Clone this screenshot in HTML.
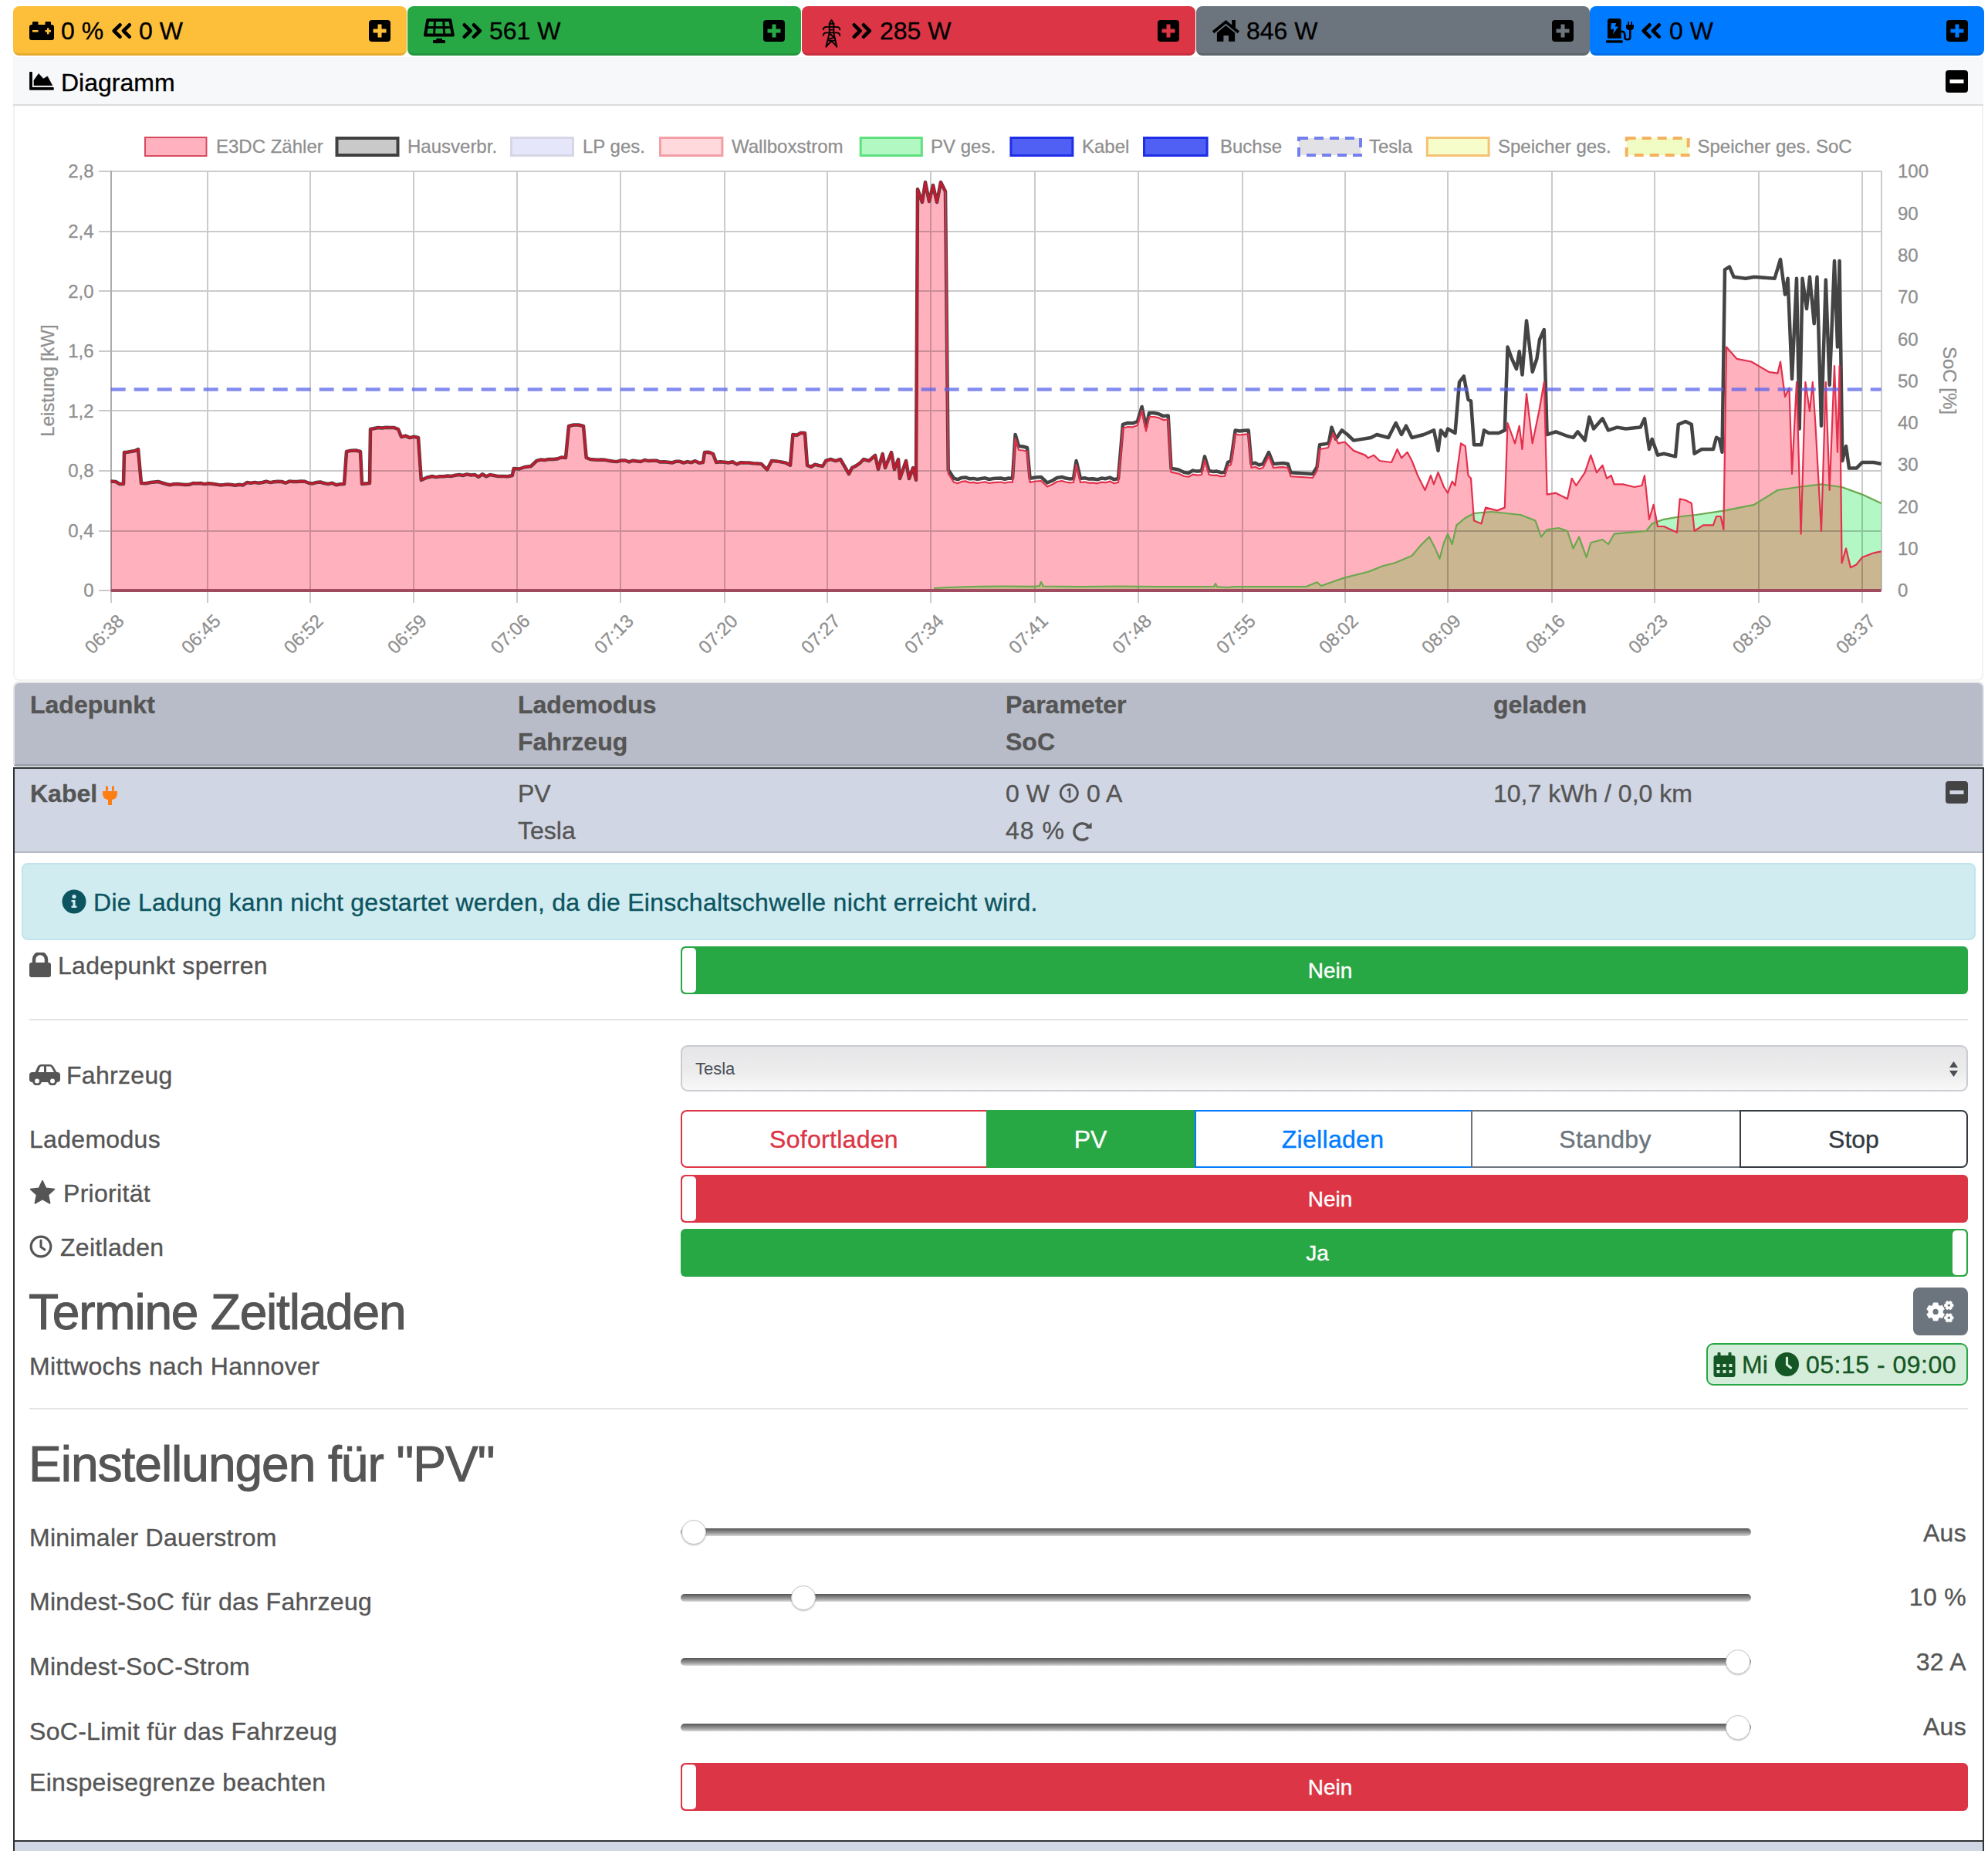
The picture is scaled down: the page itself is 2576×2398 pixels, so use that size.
<!DOCTYPE html>
<html><head><meta charset="utf-8"><style>
html,body{margin:0;padding:0;background:#fff;}
body{width:2576px;height:2398px;position:relative;overflow:hidden;font-family:"Liberation Sans", sans-serif;color:#555;}
.a{position:absolute;white-space:nowrap;}
.tb{position:absolute;top:8px;height:61px;border-radius:8px;border-bottom:3px solid rgba(0,0,0,0.12);}
.t32{font-size:32px;line-height:32px;-webkit-text-stroke:0.35px;}
.sw{position:absolute;left:882px;width:1668px;height:62px;border-radius:6px;}
.sw .h{position:absolute;top:2px;width:18px;height:58px;background:#fff;border-radius:5px;}
.sw .l{position:absolute;top:1px;left:0;right:0;line-height:62px;text-align:center;color:#fff;font-size:28px;-webkit-text-stroke:0.4px #fff;}
.trk{position:absolute;left:882px;width:1387px;height:10px;border-radius:5px;background:linear-gradient(#555,#9a9a9a 60%,#d8d8d8);}
.thumb{position:absolute;width:32px;height:32px;border-radius:50%;background:#fff;border:1px solid #c8c8c8;box-sizing:border-box;box-shadow:0 1px 2px rgba(0,0,0,0.25);}
.hr{position:absolute;left:38px;width:2512px;height:2px;background:#e5e5e5;}
</style></head><body>

<div class="tb" style="left:17px;width:510px;background:#fdbf3a;border-bottom-color:#e6aa2e"></div>
<div class="tb" style="left:528px;width:510px;background:#28a745;border-bottom-color:#23963d"></div>
<div class="tb" style="left:1039px;width:510px;background:#dc3545;border-bottom-color:#c82e3d"></div>
<div class="tb" style="left:1550px;width:510px;background:#6c757d;border-bottom-color:#5f676e"></div>
<div class="tb" style="left:2060px;width:511px;background:#007bff;border-bottom-color:#006fe6"></div>
<svg style="position:absolute;left:478px;top:26px" width="28" height="28" viewBox="0 0 28 28"><rect x="0" y="0" width="28" height="28" rx="4" fill="#000"/><rect x="11.5" y="5.5" width="5" height="17" fill="#fdbf3a"/><rect x="5.5" y="11.5" width="17" height="5" fill="#fdbf3a"/></svg>
<svg style="position:absolute;left:989px;top:26px" width="28" height="28" viewBox="0 0 28 28"><rect x="0" y="0" width="28" height="28" rx="4" fill="#000"/><rect x="11.5" y="5.5" width="5" height="17" fill="#28a745"/><rect x="5.5" y="11.5" width="17" height="5" fill="#28a745"/></svg>
<svg style="position:absolute;left:1500px;top:26px" width="28" height="28" viewBox="0 0 28 28"><rect x="0" y="0" width="28" height="28" rx="4" fill="#000"/><rect x="11.5" y="5.5" width="5" height="17" fill="#dc3545"/><rect x="5.5" y="11.5" width="17" height="5" fill="#dc3545"/></svg>
<svg style="position:absolute;left:2011px;top:26px" width="28" height="28" viewBox="0 0 28 28"><rect x="0" y="0" width="28" height="28" rx="4" fill="#000"/><rect x="11.5" y="5.5" width="5" height="17" fill="#6c757d"/><rect x="5.5" y="11.5" width="17" height="5" fill="#6c757d"/></svg>
<svg style="position:absolute;left:2522px;top:26px" width="28" height="28" viewBox="0 0 28 28"><rect x="0" y="0" width="28" height="28" rx="4" fill="#000"/><rect x="11.5" y="5.5" width="5" height="17" fill="#007bff"/><rect x="5.5" y="11.5" width="17" height="5" fill="#007bff"/></svg>
<svg class="a" style="left:38px;top:28px" width="32" height="24" viewBox="0 0 32 24"><rect x="4" y="0" width="7.5" height="5" rx="1" fill="#000"/><rect x="20.5" y="0" width="7.5" height="5" rx="1" fill="#000"/><rect x="0" y="4" width="32" height="20" rx="3" fill="#000"/><rect x="4" y="11" width="7.5" height="2.5" fill="#fdbf3a"/><rect x="20.5" y="11" width="7.5" height="2.5" fill="#fdbf3a"/><rect x="23" y="8.3" width="2.5" height="8" fill="#fdbf3a"/></svg>
<svg class="a" style="left:144.5px;top:29px" width="28" height="24" viewBox="0 0 28 24"><path d="M10.5 3.3 L2.8 11.0 L10.5 18.7 M22.7 3.3 L15.0 11.0 L22.7 18.7" fill="none" stroke="#000" stroke-width="4.6" stroke-linecap="round" stroke-linejoin="round"/></svg>
<div class="a t32" style="left:79px;top:24px;color:#000">0 %</div>
<div class="a t32" style="left:180px;top:24px;color:#000">0 W</div>
<svg class="a" style="left:540px;top:20px" width="50" height="40" viewBox="0 0 50 40"><path d="M14.2 6.1 H43.3 L46.9 25.6 H11 Z" fill="none" stroke="#000" stroke-width="4" stroke-linejoin="round"/><path d="M12.5 15.6 H45 M23.6 6 L22.5 25.6 M34.7 6 L35.7 25.6" stroke="#000" stroke-width="3"/><rect x="25.3" y="29.8" width="7.7" height="3" fill="#000"/><rect x="21" y="32.1" width="15.9" height="3.9" rx="1" fill="#000"/></svg>
<svg class="a" style="left:598.5px;top:29px" width="28" height="24" viewBox="0 0 28 24"><path d="M2.8 3.3 L10.5 11.0 L2.8 18.7 M15.0 3.3 L22.7 11.0 L15.0 18.7" fill="none" stroke="#000" stroke-width="4.6" stroke-linecap="round" stroke-linejoin="round"/></svg>
<div class="a t32" style="left:634px;top:24px;color:#000">561 W</div>
<svg class="a" style="left:1060px;top:20px" width="40" height="46" viewBox="0 0 40 46"><g stroke="#000" stroke-width="1.9" fill="none" stroke-linejoin="round" stroke-linecap="round"><path d="M17.4 6 L14.7 10.7 H20.4 Z"/><path d="M14.7 10.7 V23.1 M20.4 10.7 V23.1 M14.7 14.6 H20.4 M14.7 18.6 H20.4"/><path d="M6.8 18.3 Q7 15 10.5 14.9 H24.5 Q28 15 28.3 18.3"/><path d="M6.8 25.8 Q7 22.6 10.5 22.4 H24.5 Q28 22.6 28.3 25.8"/><path d="M14.7 23.1 L10.4 40.7 M20.4 23.1 L24.3 40.7"/><path d="M14.8 23.2 L20.8 28.5 L14.5 30.6 M12.8 32.6 H22.4 M10.8 39.8 L17.5 33.2 L23.8 39.5"/></g></svg>
<svg class="a" style="left:1104.0px;top:29px" width="28" height="24" viewBox="0 0 28 24"><path d="M2.8 3.3 L10.5 11.0 L2.8 18.7 M15.0 3.3 L22.7 11.0 L15.0 18.7" fill="none" stroke="#000" stroke-width="4.6" stroke-linecap="round" stroke-linejoin="round"/></svg>
<div class="a t32" style="left:1140px;top:24px;color:#000">285 W</div>
<svg class="a" style="left:1560px;top:20px" width="60" height="40" viewBox="0 0 60 40"><rect x="36.2" y="6" width="4.7" height="10" fill="#000"/><path d="M12 21.8 L28.4 8.4 L44.8 21.8" fill="none" stroke="#000" stroke-width="3.7" stroke-linejoin="miter"/><path d="M16.9 22.4 L28.4 13.1 L40.1 22.4 V33.8 H32 V26 H25.4 V33.8 H16.9 Z" fill="#000"/></svg>
<div class="a t32" style="left:1615px;top:24px;color:#000">846 W</div>
<svg class="a" style="left:2076px;top:20px" width="44" height="38" viewBox="0 0 44 38"><path d="M7 29.8 V7.2 Q7 4 10.2 4 H21.5 Q24.7 4 24.7 7.2 V29.8 Z" fill="#000"/><rect x="5" y="32.2" width="21.8" height="3.4" rx="1" fill="#000"/><path d="M12 10 H18.2 L16.6 14.4 H21 L14 24.2 L15.3 17.8 H11 Z" fill="#007bff"/><path d="M24 20.8 Q29.3 20.3 29.3 25 V28 Q29.3 31.2 32.9 31.2 Q36.3 31.2 36.3 28 V18" fill="none" stroke="#000" stroke-width="2.6"/><path d="M31 12 H41 V14.8 Q41 18.7 37.3 18.9 H34.7 Q31 18.7 31 14.8 Z" fill="#000"/><rect x="33.3" y="8" width="1.7" height="5" fill="#000"/><rect x="37.3" y="8" width="1.7" height="5" fill="#000"/></svg>
<svg class="a" style="left:2126.5px;top:29px" width="28" height="24" viewBox="0 0 28 24"><path d="M10.5 3.3 L2.8 11.0 L10.5 18.7 M22.7 3.3 L15.0 11.0 L22.7 18.7" fill="none" stroke="#000" stroke-width="4.6" stroke-linecap="round" stroke-linejoin="round"/></svg>
<div class="a t32" style="left:2163px;top:24px;color:#000">0 W</div>
<div class="a" style="left:17px;top:72px;width:2553px;height:810px;border:2px solid #f2f2f2;border-top:none;border-radius:0 0 8px 8px;box-sizing:border-box"></div>
<div class="a" style="left:17px;top:74px;width:2553px;height:61px;background:#f7f8fa;border-bottom:2px solid #dcdcdc"></div>
<svg class="a" style="left:38px;top:93px" width="33" height="25" viewBox="0 0 33 25"><path d="M1.1 0 H2.9 Q3.9 0 3.9 1 V20 H30.8 Q31.8 20 31.8 21 V22.7 Q31.8 23.7 30.8 23.7 H1.1 Q0.1 23.7 0.1 22.7 V1 Q0.1 0 1.1 0 Z" fill="#000"/><path d="M6 11 L12.1 2.4 L18.2 9.1 L23.5 5.9 L29.8 17.8 H6 Z" fill="#000" stroke="#000" stroke-width="0.6" stroke-linejoin="round"/></svg>
<div class="a t32" style="left:79px;top:91px;color:#000">Diagramm</div>
<svg style="position:absolute;left:2521px;top:91px" width="29" height="29" viewBox="0 0 29 29"><rect x="0" y="0" width="29" height="29" rx="4" fill="#000"/><rect x="5.5" y="12" width="18" height="5" fill="#fff"/></svg>
<svg width="2576" height="760" viewBox="0 136 2576 760" style="position:absolute;left:0;top:136px;font-family:'Liberation Sans',sans-serif"><style>text{stroke:#8f8f8f;stroke-width:0.3px}</style>
<rect x="188.0" y="178.0" width="79.5" height="24.0" fill="#ffb1bf" stroke="#d94a5e" stroke-width="2"/>
<text x="280" y="198" font-size="24" fill="#8f8f8f">E3DC Zähler</text>
<rect x="436.5" y="179.0" width="79.0" height="22.0" fill="#c9c9c9" stroke="#404040" stroke-width="4"/>
<text x="528" y="198" font-size="24" fill="#8f8f8f">Hausverbr.</text>
<rect x="662.5" y="178.5" width="80.0" height="23.0" fill="#e6e6fa" stroke="#d6d6e6" stroke-width="3"/>
<text x="755" y="198" font-size="24" fill="#8f8f8f">LP ges.</text>
<rect x="855.5" y="178.5" width="80.4" height="23.0" fill="#ffd9dc" stroke="#f49ea6" stroke-width="3"/>
<text x="948" y="198" font-size="24" fill="#8f8f8f">Wallboxstrom</text>
<rect x="1115.2" y="178.5" width="79.1" height="23.0" fill="#b2f8c2" stroke="#5ee07e" stroke-width="3"/>
<text x="1206" y="198" font-size="24" fill="#8f8f8f">PV ges.</text>
<rect x="1309.9" y="178.5" width="80.0" height="23.0" fill="#5060f4" stroke="#1e2ee6" stroke-width="3"/>
<text x="1402" y="198" font-size="24" fill="#8f8f8f">Kabel</text>
<rect x="1482.5" y="178.5" width="81.6" height="23.0" fill="#5060f4" stroke="#1e2ee6" stroke-width="3"/>
<text x="1581" y="198" font-size="24" fill="#8f8f8f">Buchse</text>
<rect x="1683.0" y="179.0" width="80.0" height="22.0" fill="#e2e2e6" stroke="#7580ef" stroke-width="4" stroke-dasharray="12 8"/>
<text x="1774" y="198" font-size="24" fill="#8f8f8f">Tesla</text>
<rect x="1849.3" y="178.5" width="79.8" height="23.0" fill="#f6fcca" stroke="#f5c274" stroke-width="3"/>
<text x="1941" y="198" font-size="24" fill="#8f8f8f">Speicher ges.</text>
<rect x="2107.7" y="179.0" width="80.0" height="22.0" fill="#f0fcc4" stroke="#f5b25e" stroke-width="4" stroke-dasharray="12 8"/>
<text x="2199.5" y="198" font-size="24" fill="#8f8f8f">Speicher ges. SoC</text>
<polygon points="143.7,764.7 143.7,623.6 150.0,624.0 155.0,627.0 160.0,627.0 161.0,586.0 165.0,585.8 175.0,584.0 179.0,582.0 183.0,626.0 189.0,626.3 195.0,625.0 205.0,624.0 215.0,627.0 220.0,628.2 225.0,627.3 230.0,627.0 240.0,628.0 245.0,627.8 250.0,626.1 255.0,626.2 260.0,626.0 265.0,627.1 270.0,626.3 275.0,626.7 280.0,627.5 285.0,628.4 290.0,628.1 295.0,627.6 300.0,628.0 305.0,628.8 310.0,627.7 315.0,628.4 320.0,625.1 325.0,625.7 330.0,624.9 335.0,625.8 340.0,625.0 345.0,623.7 350.0,625.1 355.0,624.2 360.0,623.7 365.0,624.0 370.0,625.7 375.0,623.6 380.0,624.0 385.0,623.9 390.0,623.5 395.0,623.7 400.0,625.8 405.0,626.4 410.0,625.0 415.0,624.5 420.0,626.0 425.2,627.0 430.4,625.7 435.6,628.3 440.8,627.2 446.0,627.0 449.0,585.0 455.0,583.8 461.0,583.5 467.0,585.0 469.0,627.0 479.0,626.0 480.0,556.0 490.0,554.0 495.2,554.4 500.4,553.8 505.6,554.0 510.8,554.1 516.0,556.0 520.0,566.0 525.5,564.6 531.0,567.1 536.5,565.8 542.0,567.0 545.8,622.0 552.9,618.8 560.0,617.0 565.0,618.1 570.0,617.3 575.0,617.3 580.0,616.5 585.0,616.9 590.0,615.7 595.0,615.0 600.0,616.0 605.0,614.4 610.0,615.5 615.0,614.9 620.0,617.8 625.0,614.3 630.0,617.3 635.0,615.1 640.0,616.0 646.0,617.1 651.9,617.1 657.8,617.3 663.8,616.0 665.7,607.0 672.9,607.5 680.0,605.0 688.0,604.0 695.4,597.0 700.4,595.6 705.5,596.1 710.5,595.0 716.1,594.9 721.8,594.6 727.4,592.5 733.0,593.0 737.0,552.0 743.3,550.5 749.7,550.5 756.0,552.0 759.7,593.0 764.8,595.0 769.8,595.4 774.9,595.8 779.9,595.5 785.0,596.1 790.0,597.0 795.0,597.7 800.1,597.9 805.1,596.5 810.2,596.5 815.2,598.4 820.2,596.7 825.3,597.5 830.3,598.0 835.4,596.0 840.4,597.1 845.5,596.8 850.5,596.7 855.5,598.6 860.6,598.2 865.6,598.7 870.7,599.5 875.7,597.8 880.8,597.8 885.8,599.5 890.8,598.1 895.9,599.2 900.9,597.2 906.0,599.7 911.0,599.0 913.0,586.0 918.5,585.8 924.0,588.0 928.0,599.0 933.3,598.3 938.7,598.7 944.0,599.5 949.3,598.3 954.6,601.4 960.0,599.2 965.3,599.6 970.6,599.5 975.9,600.2 981.3,600.5 986.6,601.0 994.0,608.5 999.8,597.0 1005.8,597.4 1011.9,598.4 1018.0,599.6 1024.0,602.8 1027.4,563.0 1032.6,563.8 1037.8,560.8 1043.0,561.0 1046.0,602.8 1051.0,604.8 1056.0,601.8 1061.0,603.0 1066.0,604.0 1070.0,597.0 1076.3,594.9 1082.7,597.1 1089.0,595.0 1100.0,614.0 1104.0,606.0 1109.0,603.6 1114.0,600.2 1119.0,595.0 1126.0,597.0 1134.0,590.0 1138.0,608.0 1143.6,588.0 1147.0,606.0 1155.0,586.0 1159.0,608.0 1164.0,595.0 1166.0,620.0 1174.0,597.0 1178.0,620.0 1183.0,606.0 1187.0,621.7 1189.0,245.0 1195.0,262.0 1199.0,236.0 1204.0,261.0 1209.0,240.0 1214.0,262.0 1219.0,236.0 1225.0,248.0 1228.7,613.5 1236.0,624.8 1241.1,626.1 1246.1,623.9 1251.2,623.4 1256.3,625.3 1261.3,624.9 1266.4,625.9 1271.5,625.0 1276.5,624.3 1281.6,626.0 1286.7,625.1 1291.7,624.8 1296.8,624.5 1301.9,625.7 1306.9,624.5 1312.0,624.8 1315.6,568.0 1320.0,583.0 1325.5,583.5 1331.0,585.0 1334.6,624.8 1341.8,623.5 1349.0,623.0 1357.0,630.5 1363.3,627.8 1369.7,624.0 1376.0,623.0 1381.0,624.5 1386.0,625.4 1391.0,625.0 1394.6,602.0 1400.0,625.0 1405.4,624.3 1410.9,625.6 1416.3,625.3 1421.8,626.3 1427.2,624.6 1432.7,625.2 1438.1,623.6 1443.6,626.2 1449.0,625.0 1455.0,554.8 1461.3,553.0 1467.7,553.3 1474.0,551.0 1479.6,532.0 1485.0,558.6 1489.0,540.0 1495.2,540.0 1501.3,541.2 1507.5,544.1 1513.7,543.5 1517.5,611.6 1527.0,613.5 1534.5,617.0 1540.1,617.7 1545.8,614.6 1551.4,615.6 1557.0,615.0 1561.0,596.4 1566.6,615.0 1571.7,615.9 1576.8,615.6 1581.9,617.2 1587.0,617.0 1591.0,604.0 1595.0,602.0 1600.7,562.4 1606.4,563.5 1612.0,562.8 1617.7,562.4 1621.5,606.0 1626.5,604.8 1631.6,607.4 1636.6,606.0 1644.0,591.0 1650.0,606.0 1656.3,605.4 1662.5,605.1 1668.8,606.0 1672.5,617.2 1701.0,619.0 1706.6,609.8 1710.0,582.0 1721.0,580.0 1727.5,561.0 1734.0,574.4 1742.5,572.5 1754.0,583.9 1769.0,589.6 1772.8,593.4 1780.0,589.6 1787.8,597.0 1803.0,599.0 1810.6,582.0 1816.0,593.4 1823.6,585.8 1829.5,597.0 1837.0,616.0 1846.5,635.0 1854.0,616.0 1857.9,627.4 1863.5,612.0 1871.0,631.0 1876.0,638.7 1881.7,623.6 1885.5,629.0 1893.0,574.4 1898.7,578.0 1902.5,616.0 1906.0,619.8 1910.0,674.6 1919.5,678.4 1925.0,657.6 1940.0,661.4 1949.8,657.6 1953.5,548.0 1963.0,574.4 1968.7,551.7 1972.5,582.0 1978.0,510.0 1985.7,574.4 1995.0,529.0 2000.8,495.0 2004.6,640.6 2016.0,638.7 2031.0,646.3 2036.7,619.8 2042.4,629.0 2053.7,612.2 2061.3,589.6 2068.9,612.2 2076.5,602.8 2082.0,619.8 2087.8,616.0 2091.6,627.4 2103.0,627.4 2118.0,631.0 2127.5,629.0 2131.0,616.0 2137.0,672.8 2142.6,653.8 2148.0,682.0 2156.0,682.0 2173.0,689.8 2176.7,646.3 2184.0,648.0 2191.8,652.0 2195.6,688.0 2207.0,680.3 2220.0,680.3 2224.0,669.0 2229.6,669.0 2233.4,686.0 2237.0,449.6 2250.4,464.8 2269.3,468.5 2292.0,481.8 2303.4,483.7 2307.0,468.5 2313.0,514.0 2318.5,502.6 2322.0,614.0 2328.0,495.0 2333.6,691.7 2339.4,495.0 2345.0,532.8 2348.8,495.0 2352.5,551.7 2360.0,688.0 2365.8,495.0 2370.7,635.0 2377.0,474.0 2381.0,585.8 2383.6,474.0 2386.6,729.5 2392.0,710.6 2397.9,735.2 2405.5,731.4 2413.0,722.0 2428.0,716.3 2437.6,714.4 2437.6,764.7" fill="#ffb1be"/>
<polygon points="1210.0,764.7 1210.0,762.0 1230.0,761.0 1260.0,760.0 1300.0,759.5 1340.0,759.8 1347.0,759.0 1349.0,754.0 1352.0,759.5 1400.0,760.0 1450.0,759.5 1500.0,760.0 1573.0,760.0 1575.0,756.0 1577.0,760.0 1590.0,761.0 1600.0,760.0 1650.0,760.0 1693.0,759.8 1706.6,754.2 1712.0,759.0 1731.0,752.3 1742.5,748.4 1772.8,740.8 1791.7,733.3 1806.8,729.5 1829.5,720.0 1840.8,706.6 1852.0,695.5 1859.8,710.6 1865.4,723.8 1871.0,703.0 1876.0,691.7 1881.7,705.0 1887.3,680.3 1898.7,671.0 1910.0,665.0 1932.7,663.0 1951.6,665.0 1970.5,667.0 1989.5,674.6 1997.0,695.5 2004.6,686.0 2019.7,684.0 2031.0,688.0 2038.6,710.6 2046.0,695.5 2055.7,722.0 2061.3,703.0 2076.5,699.0 2084.0,705.0 2091.6,691.7 2110.5,689.8 2133.0,688.0 2140.7,678.4 2156.0,672.8 2178.6,669.0 2197.5,667.0 2235.3,661.4 2273.0,653.8 2303.4,635.0 2330.0,631.0 2360.0,627.4 2386.6,631.0 2413.0,640.6 2437.6,652.0 2437.6,764.7" fill="#b2f7c4"/>
<polygon points="1210.0,764.7 1210.0,762.0 1211.0,762.0 1212.0,761.9 1213.0,761.9 1214.0,761.8 1215.0,761.8 1216.0,761.7 1217.0,761.6 1218.0,761.6 1219.0,761.5 1220.0,761.5 1221.0,761.5 1222.0,761.4 1223.0,761.4 1224.0,761.3 1225.0,761.2 1226.0,761.2 1227.0,761.1 1228.0,761.1 1228.7,761.1 1229.0,761.0 1230.0,761.0 1231.0,761.0 1232.0,760.9 1233.0,760.9 1234.0,760.9 1235.0,760.8 1236.0,760.8 1237.0,760.8 1238.0,760.7 1239.0,760.7 1240.0,760.7 1241.0,760.6 1241.1,760.6 1242.0,760.6 1243.0,760.6 1244.0,760.5 1245.0,760.5 1246.0,760.5 1246.1,760.5 1247.0,760.4 1248.0,760.4 1249.0,760.4 1250.0,760.3 1251.0,760.3 1251.2,760.3 1252.0,760.3 1253.0,760.2 1254.0,760.2 1255.0,760.2 1256.0,760.1 1256.3,760.1 1257.0,760.1 1258.0,760.1 1259.0,760.0 1260.0,760.0 1261.0,760.0 1261.3,760.0 1262.0,760.0 1263.0,760.0 1264.0,760.0 1265.0,759.9 1266.0,759.9 1266.4,759.9 1267.0,759.9 1268.0,759.9 1269.0,759.9 1270.0,759.9 1271.0,759.9 1271.5,759.9 1272.0,759.9 1273.0,759.8 1274.0,759.8 1275.0,759.8 1276.0,759.8 1276.5,759.8 1277.0,759.8 1278.0,759.8 1279.0,759.8 1280.0,759.8 1281.0,759.7 1281.6,759.7 1282.0,759.7 1283.0,759.7 1284.0,759.7 1285.0,759.7 1286.0,759.7 1286.7,759.7 1287.0,759.7 1288.0,759.6 1289.0,759.6 1290.0,759.6 1291.0,759.6 1291.7,759.6 1292.0,759.6 1293.0,759.6 1294.0,759.6 1295.0,759.6 1296.0,759.5 1296.8,759.5 1297.0,759.5 1298.0,759.5 1299.0,759.5 1300.0,759.5 1301.0,759.5 1301.9,759.5 1302.0,759.5 1303.0,759.5 1304.0,759.5 1305.0,759.5 1306.0,759.5 1306.9,759.6 1307.0,759.6 1308.0,759.6 1309.0,759.6 1310.0,759.6 1311.0,759.6 1312.0,759.6 1313.0,759.6 1314.0,759.6 1315.0,759.6 1315.6,759.6 1316.0,759.6 1317.0,759.6 1318.0,759.6 1319.0,759.6 1320.0,759.6 1321.0,759.7 1322.0,759.7 1323.0,759.7 1324.0,759.7 1325.0,759.7 1325.5,759.7 1326.0,759.7 1327.0,759.7 1328.0,759.7 1329.0,759.7 1330.0,759.7 1331.0,759.7 1332.0,759.7 1333.0,759.7 1334.0,759.8 1334.6,759.8 1335.0,759.8 1336.0,759.8 1337.0,759.8 1338.0,759.8 1339.0,759.8 1340.0,759.8 1341.0,759.7 1341.8,759.6 1342.0,759.6 1343.0,759.5 1344.0,759.3 1345.0,759.2 1346.0,759.1 1347.0,759.0 1348.0,756.5 1349.0,754.0 1350.0,755.8 1351.0,757.7 1352.0,759.5 1353.0,759.5 1354.0,759.5 1355.0,759.5 1356.0,759.5 1357.0,759.6 1358.0,759.6 1359.0,759.6 1360.0,759.6 1361.0,759.6 1362.0,759.6 1363.0,759.6 1363.3,759.6 1364.0,759.6 1365.0,759.6 1366.0,759.6 1367.0,759.7 1368.0,759.7 1369.0,759.7 1369.7,759.7 1370.0,759.7 1371.0,759.7 1372.0,759.7 1373.0,759.7 1374.0,759.7 1375.0,759.7 1376.0,759.8 1377.0,759.8 1378.0,759.8 1379.0,759.8 1380.0,759.8 1381.0,759.8 1382.0,759.8 1383.0,759.8 1384.0,759.8 1385.0,759.8 1386.0,759.9 1387.0,759.9 1388.0,759.9 1389.0,759.9 1390.0,759.9 1391.0,759.9 1392.0,759.9 1393.0,759.9 1394.0,759.9 1394.6,759.9 1395.0,759.9 1396.0,760.0 1397.0,760.0 1398.0,760.0 1399.0,760.0 1400.0,760.0 1401.0,760.0 1402.0,760.0 1403.0,760.0 1404.0,760.0 1405.0,760.0 1405.4,759.9 1406.0,759.9 1407.0,759.9 1408.0,759.9 1409.0,759.9 1410.0,759.9 1410.9,759.9 1411.0,759.9 1412.0,759.9 1413.0,759.9 1414.0,759.9 1415.0,759.9 1416.0,759.8 1416.3,759.8 1417.0,759.8 1418.0,759.8 1419.0,759.8 1420.0,759.8 1421.0,759.8 1421.8,759.8 1422.0,759.8 1423.0,759.8 1424.0,759.8 1425.0,759.8 1426.0,759.7 1427.0,759.7 1427.2,759.7 1428.0,759.7 1429.0,759.7 1430.0,759.7 1431.0,759.7 1432.0,759.7 1432.7,759.7 1433.0,759.7 1434.0,759.7 1435.0,759.6 1436.0,759.6 1437.0,759.6 1438.0,759.6 1438.1,759.6 1439.0,759.6 1440.0,759.6 1441.0,759.6 1442.0,759.6 1443.0,759.6 1443.6,759.6 1444.0,759.6 1445.0,759.5 1446.0,759.5 1447.0,759.5 1448.0,759.5 1449.0,759.5 1450.0,759.5 1451.0,759.5 1452.0,759.5 1453.0,759.5 1454.0,759.5 1455.0,759.5 1456.0,759.6 1457.0,759.6 1458.0,759.6 1459.0,759.6 1460.0,759.6 1461.0,759.6 1461.3,759.6 1462.0,759.6 1463.0,759.6 1464.0,759.6 1465.0,759.6 1466.0,759.7 1467.0,759.7 1467.7,759.7 1468.0,759.7 1469.0,759.7 1470.0,759.7 1471.0,759.7 1472.0,759.7 1473.0,759.7 1474.0,759.7 1475.0,759.8 1476.0,759.8 1477.0,759.8 1478.0,759.8 1479.0,759.8 1479.6,759.8 1480.0,759.8 1481.0,759.8 1482.0,759.8 1483.0,759.8 1484.0,759.8 1485.0,759.9 1486.0,759.9 1487.0,759.9 1488.0,759.9 1489.0,759.9 1490.0,759.9 1491.0,759.9 1492.0,759.9 1493.0,759.9 1494.0,759.9 1495.0,760.0 1495.2,760.0 1496.0,760.0 1497.0,760.0 1498.0,760.0 1499.0,760.0 1500.0,760.0 1501.0,760.0 1501.3,760.0 1502.0,760.0 1503.0,760.0 1504.0,760.0 1505.0,760.0 1506.0,760.0 1507.0,760.0 1507.5,760.0 1508.0,760.0 1509.0,760.0 1510.0,760.0 1511.0,760.0 1512.0,760.0 1513.0,760.0 1513.7,760.0 1514.0,760.0 1515.0,760.0 1516.0,760.0 1517.0,760.0 1517.5,760.0 1518.0,760.0 1519.0,760.0 1520.0,760.0 1521.0,760.0 1522.0,760.0 1523.0,760.0 1524.0,760.0 1525.0,760.0 1526.0,760.0 1527.0,760.0 1528.0,760.0 1529.0,760.0 1530.0,760.0 1531.0,760.0 1532.0,760.0 1533.0,760.0 1534.0,760.0 1534.5,760.0 1535.0,760.0 1536.0,760.0 1537.0,760.0 1538.0,760.0 1539.0,760.0 1540.0,760.0 1540.1,760.0 1541.0,760.0 1542.0,760.0 1543.0,760.0 1544.0,760.0 1545.0,760.0 1545.8,760.0 1546.0,760.0 1547.0,760.0 1548.0,760.0 1549.0,760.0 1550.0,760.0 1551.0,760.0 1551.4,760.0 1552.0,760.0 1553.0,760.0 1554.0,760.0 1555.0,760.0 1556.0,760.0 1557.0,760.0 1558.0,760.0 1559.0,760.0 1560.0,760.0 1561.0,760.0 1562.0,760.0 1563.0,760.0 1564.0,760.0 1565.0,760.0 1566.0,760.0 1566.6,760.0 1567.0,760.0 1568.0,760.0 1569.0,760.0 1570.0,760.0 1571.0,760.0 1571.7,760.0 1572.0,760.0 1573.0,760.0 1574.0,758.0 1575.0,756.0 1576.0,758.0 1576.8,759.6 1577.0,760.0 1578.0,760.1 1579.0,760.2 1580.0,760.2 1581.0,760.3 1581.9,760.4 1582.0,760.4 1583.0,760.5 1584.0,760.5 1585.0,760.6 1586.0,760.7 1587.0,760.8 1588.0,760.8 1589.0,760.9 1590.0,761.0 1591.0,760.9 1592.0,760.8 1593.0,760.7 1594.0,760.6 1595.0,760.5 1596.0,760.4 1597.0,760.3 1598.0,760.2 1599.0,760.1 1600.0,760.0 1600.7,760.0 1601.0,760.0 1602.0,760.0 1603.0,760.0 1604.0,760.0 1605.0,760.0 1606.0,760.0 1606.4,760.0 1607.0,760.0 1608.0,760.0 1609.0,760.0 1610.0,760.0 1611.0,760.0 1612.0,760.0 1612.0,760.0 1613.0,760.0 1614.0,760.0 1615.0,760.0 1616.0,760.0 1617.0,760.0 1617.7,760.0 1618.0,760.0 1619.0,760.0 1620.0,760.0 1621.0,760.0 1621.5,760.0 1622.0,760.0 1623.0,760.0 1624.0,760.0 1625.0,760.0 1626.0,760.0 1626.5,760.0 1627.0,760.0 1628.0,760.0 1629.0,760.0 1630.0,760.0 1631.0,760.0 1631.6,760.0 1632.0,760.0 1633.0,760.0 1634.0,760.0 1635.0,760.0 1636.0,760.0 1636.6,760.0 1637.0,760.0 1638.0,760.0 1639.0,760.0 1640.0,760.0 1641.0,760.0 1642.0,760.0 1643.0,760.0 1644.0,760.0 1645.0,760.0 1646.0,760.0 1647.0,760.0 1648.0,760.0 1649.0,760.0 1650.0,760.0 1651.0,760.0 1652.0,760.0 1653.0,760.0 1654.0,760.0 1655.0,760.0 1656.0,760.0 1656.3,760.0 1657.0,760.0 1658.0,760.0 1659.0,760.0 1660.0,760.0 1661.0,759.9 1662.0,759.9 1662.5,759.9 1663.0,759.9 1664.0,759.9 1665.0,759.9 1666.0,759.9 1667.0,759.9 1668.0,759.9 1668.8,759.9 1669.0,759.9 1670.0,759.9 1671.0,759.9 1672.0,759.9 1672.5,759.9 1673.0,759.9 1674.0,759.9 1675.0,759.9 1676.0,759.9 1677.0,759.9 1678.0,759.9 1679.0,759.9 1680.0,759.9 1681.0,759.9 1682.0,759.9 1683.0,759.8 1684.0,759.8 1685.0,759.8 1686.0,759.8 1687.0,759.8 1688.0,759.8 1689.0,759.8 1690.0,759.8 1691.0,759.8 1692.0,759.8 1693.0,759.8 1694.0,759.4 1695.0,759.0 1696.0,758.6 1697.0,758.2 1698.0,757.7 1699.0,757.3 1700.0,756.9 1701.0,756.5 1702.0,756.1 1703.0,755.7 1704.0,755.3 1705.0,754.9 1706.0,754.4 1706.6,754.2 1707.0,754.6 1708.0,755.4 1709.0,756.3 1710.0,757.2 1711.0,758.1 1712.0,759.0 1713.0,758.6 1714.0,758.3 1715.0,757.9 1716.0,757.6 1717.0,757.2 1718.0,756.9 1719.0,756.5 1720.0,756.2 1721.0,755.8 1722.0,755.5 1723.0,755.1 1724.0,754.8 1725.0,754.4 1726.0,754.1 1727.0,753.7 1727.5,753.5 1728.0,753.4 1729.0,753.0 1730.0,752.7 1731.0,752.3 1732.0,752.0 1733.0,751.6 1734.0,751.3 1735.0,750.9 1736.0,750.6 1737.0,750.3 1738.0,749.9 1739.0,749.6 1740.0,749.2 1741.0,748.9 1742.0,748.6 1742.5,748.4 1743.0,748.3 1744.0,748.0 1745.0,747.8 1746.0,747.5 1747.0,747.3 1748.0,747.0 1749.0,746.8 1750.0,746.5 1751.0,746.3 1752.0,746.0 1753.0,745.8 1754.0,745.5 1755.0,745.3 1756.0,745.0 1757.0,744.8 1758.0,744.5 1759.0,744.3 1760.0,744.0 1761.0,743.8 1762.0,743.5 1763.0,743.3 1764.0,743.0 1765.0,742.8 1766.0,742.5 1767.0,742.3 1768.0,742.0 1769.0,741.8 1770.0,741.5 1771.0,741.3 1772.0,741.0 1772.8,740.8 1773.0,740.7 1774.0,740.3 1775.0,739.9 1776.0,739.5 1777.0,739.1 1778.0,738.7 1779.0,738.3 1780.0,737.9 1781.0,737.5 1782.0,737.1 1783.0,736.8 1784.0,736.4 1785.0,736.0 1786.0,735.6 1787.0,735.2 1787.8,734.8 1788.0,734.8 1789.0,734.4 1790.0,734.0 1791.0,733.6 1791.7,733.3 1792.0,733.2 1793.0,733.0 1794.0,732.7 1795.0,732.5 1796.0,732.2 1797.0,732.0 1798.0,731.7 1799.0,731.5 1800.0,731.2 1801.0,731.0 1802.0,730.7 1803.0,730.5 1804.0,730.2 1805.0,730.0 1806.0,729.7 1806.8,729.5 1807.0,729.4 1808.0,729.0 1809.0,728.6 1810.0,728.2 1810.6,727.9 1811.0,727.7 1812.0,727.3 1813.0,726.9 1814.0,726.5 1815.0,726.1 1816.0,725.6 1817.0,725.2 1818.0,724.8 1819.0,724.4 1820.0,724.0 1821.0,723.6 1822.0,723.1 1823.0,722.7 1823.6,722.5 1824.0,722.3 1825.0,721.9 1826.0,721.5 1827.0,721.0 1828.0,720.6 1829.0,720.2 1829.5,720.0 1830.0,719.4 1831.0,718.2 1832.0,717.0 1833.0,715.8 1834.0,714.7 1835.0,713.5 1836.0,712.3 1837.0,711.1 1838.0,709.9 1839.0,708.7 1840.0,707.5 1840.8,706.6 1841.0,706.4 1842.0,705.4 1843.0,704.4 1844.0,703.4 1845.0,702.4 1846.0,701.4 1846.5,701.0 1847.0,700.5 1848.0,699.5 1849.0,698.5 1850.0,697.5 1851.0,696.5 1852.0,695.5 1853.0,697.4 1854.0,699.4 1855.0,701.3 1856.0,703.2 1857.0,705.2 1857.9,706.9 1858.0,707.1 1859.0,709.1 1859.8,710.6 1860.0,711.1 1861.0,713.4 1862.0,715.8 1863.0,718.1 1863.5,719.3 1864.0,720.5 1865.0,722.9 1865.4,723.8 1866.0,721.6 1867.0,717.9 1868.0,714.1 1869.0,710.4 1870.0,706.7 1871.0,703.0 1872.0,700.7 1873.0,698.5 1874.0,696.2 1875.0,694.0 1876.0,691.7 1877.0,694.0 1878.0,696.4 1879.0,698.7 1880.0,701.0 1881.0,703.4 1881.7,705.0 1882.0,703.7 1883.0,699.3 1884.0,694.9 1885.0,690.4 1885.5,688.2 1886.0,686.0 1887.0,681.6 1887.3,680.3 1888.0,679.7 1889.0,678.9 1890.0,678.1 1891.0,677.3 1892.0,676.5 1893.0,675.6 1894.0,674.8 1895.0,674.0 1896.0,673.2 1897.0,672.4 1898.0,671.6 1898.7,671.0 1899.0,670.8 1900.0,670.3 1901.0,669.8 1902.0,669.2 1902.5,669.0 1903.0,668.7 1904.0,668.2 1905.0,667.7 1906.0,667.1 1907.0,666.6 1908.0,666.1 1909.0,665.5 1910.0,674.6 1911.0,675.0 1912.0,675.4 1913.0,675.8 1914.0,676.2 1915.0,676.6 1916.0,677.0 1917.0,677.4 1918.0,677.8 1919.0,678.2 1919.5,678.4 1920.0,676.5 1921.0,672.7 1922.0,668.9 1923.0,665.2 1924.0,663.8 1925.0,663.7 1926.0,663.6 1927.0,663.5 1928.0,663.4 1929.0,663.3 1930.0,663.2 1931.0,663.1 1932.0,663.1 1932.7,663.0 1933.0,663.0 1934.0,663.1 1935.0,663.2 1936.0,663.3 1937.0,663.5 1938.0,663.6 1939.0,663.7 1940.0,663.8 1941.0,663.9 1942.0,664.0 1943.0,664.1 1944.0,664.2 1945.0,664.3 1946.0,664.4 1947.0,664.5 1948.0,664.6 1949.0,664.7 1949.8,664.8 1950.0,664.8 1951.0,664.9 1951.6,665.0 1952.0,665.0 1953.0,665.1 1953.5,665.2 1954.0,665.3 1955.0,665.4 1956.0,665.5 1957.0,665.6 1958.0,665.7 1959.0,665.8 1960.0,665.9 1961.0,666.0 1962.0,666.1 1963.0,666.2 1964.0,666.3 1965.0,666.4 1966.0,666.5 1967.0,666.6 1968.0,666.7 1968.7,666.8 1969.0,666.8 1970.0,666.9 1970.5,667.0 1971.0,667.2 1972.0,667.6 1972.5,667.8 1973.0,668.0 1974.0,668.4 1975.0,668.8 1976.0,669.2 1977.0,669.6 1978.0,670.0 1979.0,670.4 1980.0,670.8 1981.0,671.2 1982.0,671.6 1983.0,672.0 1984.0,672.4 1985.0,672.8 1985.7,673.1 1986.0,673.2 1987.0,673.6 1988.0,674.0 1989.0,674.4 1989.5,674.6 1990.0,676.0 1991.0,678.8 1992.0,681.6 1993.0,684.4 1994.0,687.1 1995.0,689.9 1996.0,692.7 1997.0,695.5 1998.0,694.2 1999.0,693.0 2000.0,691.8 2000.8,690.8 2001.0,690.5 2002.0,689.2 2003.0,688.0 2004.0,686.7 2004.6,686.0 2005.0,685.9 2006.0,685.8 2007.0,685.7 2008.0,685.5 2009.0,685.4 2010.0,685.3 2011.0,685.2 2012.0,685.0 2013.0,684.9 2014.0,684.8 2015.0,684.6 2016.0,684.5 2017.0,684.4 2018.0,684.2 2019.0,684.1 2019.7,684.0 2020.0,684.1 2021.0,684.5 2022.0,684.8 2023.0,685.2 2024.0,685.5 2025.0,685.9 2026.0,686.2 2027.0,686.6 2028.0,686.9 2029.0,687.3 2030.0,687.6 2031.0,688.0 2032.0,691.0 2033.0,693.9 2034.0,696.9 2035.0,699.9 2036.0,702.9 2036.7,705.0 2037.0,705.8 2038.0,708.8 2038.6,710.6 2039.0,709.8 2040.0,707.7 2041.0,705.7 2042.0,703.7 2042.4,702.8 2043.0,701.6 2044.0,699.6 2045.0,697.5 2046.0,695.5 2047.0,698.2 2048.0,701.0 2049.0,703.7 2050.0,706.4 2051.0,709.2 2052.0,711.9 2053.0,714.6 2053.7,716.5 2054.0,717.4 2055.0,720.1 2055.7,722.0 2056.0,721.0 2057.0,717.6 2058.0,714.2 2059.0,710.8 2060.0,707.4 2061.0,704.0 2061.3,703.0 2062.0,702.8 2063.0,702.6 2064.0,702.3 2065.0,702.0 2066.0,701.8 2067.0,701.5 2068.0,701.2 2068.9,701.0 2069.0,701.0 2070.0,700.7 2071.0,700.4 2072.0,700.2 2073.0,699.9 2074.0,699.7 2075.0,699.4 2076.0,699.1 2076.5,699.0 2077.0,699.4 2078.0,700.2 2079.0,701.0 2080.0,701.8 2081.0,702.6 2082.0,703.4 2083.0,704.2 2084.0,705.0 2085.0,703.2 2086.0,701.5 2087.0,699.8 2087.8,698.3 2088.0,698.0 2089.0,696.2 2090.0,694.5 2091.0,692.7 2091.6,691.7 2092.0,691.7 2093.0,691.6 2094.0,691.5 2095.0,691.4 2096.0,691.3 2097.0,691.2 2098.0,691.1 2099.0,691.0 2100.0,690.9 2101.0,690.8 2102.0,690.7 2103.0,690.6 2104.0,690.5 2105.0,690.4 2106.0,690.3 2107.0,690.2 2108.0,690.1 2109.0,690.0 2110.0,689.9 2110.5,689.8 2111.0,689.8 2112.0,689.7 2113.0,689.6 2114.0,689.5 2115.0,689.4 2116.0,689.4 2117.0,689.3 2118.0,689.2 2119.0,689.1 2120.0,689.0 2121.0,689.0 2122.0,688.9 2123.0,688.8 2124.0,688.7 2125.0,688.6 2126.0,688.6 2127.0,688.5 2127.5,688.4 2128.0,688.4 2129.0,688.3 2130.0,688.2 2131.0,688.2 2132.0,688.1 2133.0,688.0 2134.0,686.8 2135.0,685.5 2136.0,684.3 2137.0,683.0 2138.0,681.8 2139.0,680.5 2140.0,679.3 2140.7,678.4 2141.0,678.3 2142.0,677.9 2142.6,677.7 2143.0,677.6 2144.0,677.2 2145.0,676.8 2146.0,676.5 2147.0,676.8 2148.0,682.0 2149.0,682.0 2150.0,682.0 2151.0,682.0 2152.0,682.0 2153.0,682.0 2154.0,682.0 2155.0,682.0 2156.0,682.0 2157.0,682.5 2158.0,682.9 2159.0,683.4 2160.0,683.8 2161.0,684.3 2162.0,684.8 2163.0,685.2 2164.0,685.7 2165.0,686.1 2166.0,686.6 2167.0,687.0 2168.0,687.5 2169.0,688.0 2170.0,688.4 2171.0,688.9 2172.0,689.3 2173.0,689.8 2174.0,678.0 2175.0,669.6 2176.0,669.4 2176.7,669.3 2177.0,669.3 2178.0,669.1 2178.6,669.0 2179.0,669.0 2180.0,668.9 2181.0,668.7 2182.0,668.6 2183.0,668.5 2184.0,668.4 2185.0,668.3 2186.0,668.2 2187.0,668.1 2188.0,668.0 2189.0,667.9 2190.0,667.8 2191.0,667.7 2191.8,667.6 2192.0,667.6 2193.0,667.5 2194.0,672.8 2195.0,682.3 2195.6,688.0 2196.0,687.7 2197.0,687.1 2197.5,686.7 2198.0,686.4 2199.0,685.7 2200.0,685.0 2201.0,684.4 2202.0,683.7 2203.0,683.0 2204.0,682.3 2205.0,681.7 2206.0,681.0 2207.0,680.3 2208.0,680.3 2209.0,680.3 2210.0,680.3 2211.0,680.3 2212.0,680.3 2213.0,680.3 2214.0,680.3 2215.0,680.3 2216.0,680.3 2217.0,680.3 2218.0,680.3 2219.0,680.3 2220.0,680.3 2221.0,677.5 2222.0,674.6 2223.0,671.8 2224.0,669.0 2225.0,669.0 2226.0,669.0 2227.0,669.0 2228.0,669.0 2229.0,669.0 2229.6,669.0 2230.0,670.8 2231.0,675.3 2232.0,679.7 2233.0,684.2 2233.4,686.0 2234.0,661.6 2235.0,661.4 2235.3,661.4 2236.0,661.3 2237.0,661.1 2238.0,660.9 2239.0,660.7 2240.0,660.5 2241.0,660.3 2242.0,660.0 2243.0,659.8 2244.0,659.6 2245.0,659.4 2246.0,659.2 2247.0,659.0 2248.0,658.8 2249.0,658.6 2250.0,658.4 2250.4,658.4 2251.0,658.2 2252.0,658.0 2253.0,657.8 2254.0,657.6 2255.0,657.4 2256.0,657.2 2257.0,657.0 2258.0,656.8 2259.0,656.6 2260.0,656.4 2261.0,656.2 2262.0,656.0 2263.0,655.8 2264.0,655.6 2265.0,655.4 2266.0,655.2 2267.0,655.0 2268.0,654.8 2269.0,654.6 2269.3,654.5 2270.0,654.4 2271.0,654.2 2272.0,654.0 2273.0,653.8 2274.0,653.2 2275.0,652.6 2276.0,651.9 2277.0,651.3 2278.0,650.7 2279.0,650.1 2280.0,649.5 2281.0,648.9 2282.0,648.2 2283.0,647.6 2284.0,647.0 2285.0,646.4 2286.0,645.8 2287.0,645.1 2288.0,644.5 2289.0,643.9 2290.0,643.3 2291.0,642.7 2292.0,642.1 2293.0,641.4 2294.0,640.8 2295.0,640.2 2296.0,639.6 2297.0,639.0 2298.0,638.3 2299.0,637.7 2300.0,637.1 2301.0,636.5 2302.0,635.9 2303.0,635.2 2303.4,635.0 2304.0,634.9 2305.0,634.8 2306.0,634.6 2307.0,634.5 2308.0,634.3 2309.0,634.2 2310.0,634.0 2311.0,633.9 2312.0,633.7 2313.0,633.6 2314.0,633.4 2315.0,633.3 2316.0,633.1 2317.0,633.0 2318.0,632.8 2318.5,632.7 2319.0,632.7 2320.0,632.5 2321.0,632.4 2322.0,632.2 2323.0,632.1 2324.0,631.9 2325.0,631.8 2326.0,631.6 2327.0,631.5 2328.0,631.3 2329.0,631.2 2330.0,631.0 2331.0,630.9 2332.0,635.5 2333.0,670.6 2333.6,691.7 2334.0,678.1 2335.0,644.2 2336.0,630.3 2337.0,630.2 2338.0,630.0 2339.0,629.9 2339.4,629.9 2340.0,629.8 2341.0,629.7 2342.0,629.6 2343.0,629.4 2344.0,629.3 2345.0,629.2 2346.0,629.1 2347.0,629.0 2348.0,628.8 2348.8,628.7 2349.0,628.7 2350.0,628.6 2351.0,628.5 2352.0,628.4 2352.5,628.3 2353.0,628.2 2354.0,628.1 2355.0,628.0 2356.0,627.9 2357.0,633.5 2358.0,651.7 2359.0,669.8 2360.0,688.0 2361.0,654.7 2362.0,627.7 2363.0,627.8 2364.0,627.9 2365.0,628.1 2365.8,628.2 2366.0,628.2 2367.0,628.3 2368.0,628.5 2369.0,628.6 2370.0,628.8 2370.7,635.0 2371.0,628.9 2372.0,629.0 2373.0,629.2 2374.0,629.3 2375.0,629.4 2376.0,629.6 2377.0,629.7 2378.0,629.8 2379.0,630.0 2380.0,630.1 2381.0,630.2 2382.0,630.4 2383.0,630.5 2383.6,630.6 2384.0,630.6 2385.0,630.8 2386.0,678.4 2386.6,729.5 2387.0,728.1 2388.0,724.6 2389.0,721.1 2390.0,717.6 2391.0,714.1 2392.0,710.6 2393.0,714.8 2394.0,718.9 2395.0,723.1 2396.0,727.3 2397.0,731.4 2397.9,735.2 2398.0,735.2 2399.0,734.7 2400.0,734.2 2401.0,733.7 2402.0,733.1 2403.0,732.6 2404.0,732.1 2405.0,731.6 2405.5,731.4 2406.0,730.8 2407.0,729.5 2408.0,728.3 2409.0,727.0 2410.0,725.8 2411.0,724.5 2412.0,723.3 2413.0,722.0 2414.0,721.6 2415.0,721.2 2416.0,720.9 2417.0,720.5 2418.0,720.1 2419.0,719.7 2420.0,719.3 2421.0,719.0 2422.0,718.6 2423.0,718.2 2424.0,717.8 2425.0,717.4 2426.0,717.1 2427.0,716.7 2428.0,716.3 2429.0,716.1 2430.0,715.9 2431.0,715.7 2432.0,715.5 2433.0,715.3 2434.0,715.1 2435.0,714.9 2436.0,714.7 2437.0,714.5 2437.6,714.4 2437.6,764.7" fill="#cab690"/>
<g stroke="#000" stroke-width="2" opacity="0.2"><line x1="128" y1="222" x2="2438" y2="222"/><line x1="128" y1="300" x2="2438" y2="300"/><line x1="128" y1="377" x2="2438" y2="377"/><line x1="128" y1="455" x2="2438" y2="455"/><line x1="128" y1="532" x2="2438" y2="532"/><line x1="128" y1="610" x2="2438" y2="610"/><line x1="128" y1="688" x2="2438" y2="688"/><line x1="128" y1="765" x2="2438" y2="765"/><line x1="144" y1="221" x2="144" y2="781"/><line x1="269" y1="221" x2="269" y2="781"/><line x1="402" y1="221" x2="402" y2="781"/><line x1="536" y1="221" x2="536" y2="781"/><line x1="670" y1="221" x2="670" y2="781"/><line x1="804" y1="221" x2="804" y2="781"/><line x1="939" y1="221" x2="939" y2="781"/><line x1="1072" y1="221" x2="1072" y2="781"/><line x1="1206" y1="221" x2="1206" y2="781"/><line x1="1341" y1="221" x2="1341" y2="781"/><line x1="1475" y1="221" x2="1475" y2="781"/><line x1="1610" y1="221" x2="1610" y2="781"/><line x1="1743" y1="221" x2="1743" y2="781"/><line x1="1876" y1="221" x2="1876" y2="781"/><line x1="2011" y1="221" x2="2011" y2="781"/><line x1="2144" y1="221" x2="2144" y2="781"/><line x1="2279" y1="221" x2="2279" y2="781"/><line x1="2413" y1="221" x2="2413" y2="781"/><line x1="2438" y1="221" x2="2438" y2="765"/></g>
<line x1="144" y1="221" x2="144" y2="765" stroke="rgba(0,0,0,0.15)" stroke-width="2"/>
<polyline points="1210.0,762.0 1230.0,761.0 1260.0,760.0 1300.0,759.5 1340.0,759.8 1347.0,759.0 1349.0,754.0 1352.0,759.5 1400.0,760.0 1450.0,759.5 1500.0,760.0 1573.0,760.0 1575.0,756.0 1577.0,760.0 1590.0,761.0 1600.0,760.0 1650.0,760.0 1693.0,759.8 1706.6,754.2 1712.0,759.0 1731.0,752.3 1742.5,748.4 1772.8,740.8 1791.7,733.3 1806.8,729.5 1829.5,720.0 1840.8,706.6 1852.0,695.5 1859.8,710.6 1865.4,723.8 1871.0,703.0 1876.0,691.7 1881.7,705.0 1887.3,680.3 1898.7,671.0 1910.0,665.0 1932.7,663.0 1951.6,665.0 1970.5,667.0 1989.5,674.6 1997.0,695.5 2004.6,686.0 2019.7,684.0 2031.0,688.0 2038.6,710.6 2046.0,695.5 2055.7,722.0 2061.3,703.0 2076.5,699.0 2084.0,705.0 2091.6,691.7 2110.5,689.8 2133.0,688.0 2140.7,678.4 2156.0,672.8 2178.6,669.0 2197.5,667.0 2235.3,661.4 2273.0,653.8 2303.4,635.0 2330.0,631.0 2360.0,627.4 2386.6,631.0 2413.0,640.6 2437.6,652.0" fill="none" stroke="#6aa84f" stroke-width="2.2" stroke-linejoin="round"/>
<polyline points="143.7,623.6 150.0,624.0 155.0,627.0 160.0,627.0 161.0,586.0 165.0,585.8 175.0,584.0 179.0,582.0 183.0,626.0 189.0,626.3 195.0,625.0 205.0,624.0 215.0,627.0 220.0,628.2 225.0,627.3 230.0,627.0 240.0,628.0 245.0,627.8 250.0,626.1 255.0,626.2 260.0,626.0 265.0,627.1 270.0,626.3 275.0,626.7 280.0,627.5 285.0,628.4 290.0,628.1 295.0,627.6 300.0,628.0 305.0,628.8 310.0,627.7 315.0,628.4 320.0,625.1 325.0,625.7 330.0,624.9 335.0,625.8 340.0,625.0 345.0,623.7 350.0,625.1 355.0,624.2 360.0,623.7 365.0,624.0 370.0,625.7 375.0,623.6 380.0,624.0 385.0,623.9 390.0,623.5 395.0,623.7 400.0,625.8 405.0,626.4 410.0,625.0 415.0,624.5 420.0,626.0 425.2,627.0 430.4,625.7 435.6,628.3 440.8,627.2 446.0,627.0 449.0,585.0 455.0,583.8 461.0,583.5 467.0,585.0 469.0,627.0 479.0,626.0 480.0,556.0 490.0,554.0 495.2,554.4 500.4,553.8 505.6,554.0 510.8,554.1 516.0,556.0 520.0,566.0 525.5,564.6 531.0,567.1 536.5,565.8 542.0,567.0 545.8,622.0 552.9,618.8 560.0,617.0 565.0,618.1 570.0,617.3 575.0,617.3 580.0,616.5 585.0,616.9 590.0,615.7 595.0,615.0 600.0,616.0 605.0,614.4 610.0,615.5 615.0,614.9 620.0,617.8 625.0,614.3 630.0,617.3 635.0,615.1 640.0,616.0 646.0,617.1 651.9,617.1 657.8,617.3 663.8,616.0 665.7,607.0 672.9,607.5 680.0,605.0 688.0,604.0 695.4,597.0 700.4,595.6 705.5,596.1 710.5,595.0 716.1,594.9 721.8,594.6 727.4,592.5 733.0,593.0 737.0,552.0 743.3,550.5 749.7,550.5 756.0,552.0 759.7,593.0 764.8,595.0 769.8,595.4 774.9,595.8 779.9,595.5 785.0,596.1 790.0,597.0 795.0,597.7 800.1,597.9 805.1,596.5 810.2,596.5 815.2,598.4 820.2,596.7 825.3,597.5 830.3,598.0 835.4,596.0 840.4,597.1 845.5,596.8 850.5,596.7 855.5,598.6 860.6,598.2 865.6,598.7 870.7,599.5 875.7,597.8 880.8,597.8 885.8,599.5 890.8,598.1 895.9,599.2 900.9,597.2 906.0,599.7 911.0,599.0 913.0,586.0 918.5,585.8 924.0,588.0 928.0,599.0 933.3,598.3 938.7,598.7 944.0,599.5 949.3,598.3 954.6,601.4 960.0,599.2 965.3,599.6 970.6,599.5 975.9,600.2 981.3,600.5 986.6,601.0 994.0,608.5 999.8,597.0 1005.8,597.4 1011.9,598.4 1018.0,599.6 1024.0,602.8 1027.4,563.0 1032.6,563.8 1037.8,560.8 1043.0,561.0 1046.0,602.8 1051.0,604.8 1056.0,601.8 1061.0,603.0 1066.0,604.0 1070.0,597.0 1076.3,594.9 1082.7,597.1 1089.0,595.0 1100.0,614.0 1104.0,606.0 1109.0,603.6 1114.0,600.2 1119.0,595.0 1126.0,597.0 1134.0,590.0 1138.0,608.0 1143.6,588.0 1147.0,606.0 1155.0,586.0 1159.0,608.0 1164.0,595.0 1166.0,620.0 1174.0,597.0 1178.0,620.0 1183.0,606.0 1187.0,621.7 1189.0,245.0 1195.0,262.0 1199.0,236.0 1204.0,261.0 1209.0,240.0 1214.0,262.0 1219.0,236.0 1225.0,248.0 1228.7,608.5 1236.0,619.8 1241.1,621.1 1246.1,618.9 1251.2,618.4 1256.3,620.3 1261.3,619.9 1266.4,620.9 1271.5,620.0 1276.5,619.3 1281.6,621.0 1286.7,620.1 1291.7,619.8 1296.8,619.5 1301.9,620.7 1306.9,619.5 1312.0,619.8 1315.6,563.0 1320.0,578.0 1325.5,578.5 1331.0,580.0 1334.6,619.8 1341.8,618.5 1349.0,618.0 1357.0,625.5 1363.3,622.8 1369.7,619.0 1376.0,618.0 1381.0,619.5 1386.0,620.4 1391.0,620.0 1394.6,597.0 1400.0,620.0 1405.4,619.3 1410.9,620.6 1416.3,620.3 1421.8,621.3 1427.2,619.6 1432.7,620.2 1438.1,618.6 1443.6,621.2 1449.0,620.0 1455.0,549.8 1461.3,548.0 1467.7,548.3 1474.0,546.0 1479.6,527.0 1485.0,553.6 1489.0,535.0 1495.2,535.0 1501.3,536.2 1507.5,539.1 1513.7,538.5 1517.5,606.6 1527.0,608.5 1534.5,612.0 1540.1,612.7 1545.8,609.6 1551.4,610.6 1557.0,610.0 1561.0,591.4 1566.6,610.0 1571.7,610.9 1576.8,610.6 1581.9,612.2 1587.0,612.0 1591.0,599.0 1595.0,597.0 1600.7,557.4 1606.4,558.5 1612.0,557.8 1617.7,557.4 1621.5,601.0 1626.5,599.8 1631.6,602.4 1636.6,601.0 1644.0,586.0 1650.0,601.0 1656.3,600.4 1662.5,600.1 1668.8,601.0 1672.5,612.2 1701.0,614.0 1706.6,604.8 1710.0,576.3 1721.7,574.4 1725.5,553.6 1731.0,568.8 1738.7,557.4 1746.0,563.0 1754.0,570.6 1776.5,567.0 1784.0,563.0 1799.0,567.0 1808.7,548.0 1816.0,563.0 1822.0,551.7 1829.5,567.0 1845.0,563.0 1858.0,557.4 1863.5,583.9 1867.0,557.4 1873.0,565.0 1876.0,555.5 1885.5,561.0 1891.0,495.0 1896.8,487.4 1902.5,517.7 1906.0,519.6 1910.0,576.3 1919.5,576.3 1923.0,557.4 1929.0,561.0 1942.0,561.0 1949.8,557.4 1953.5,449.6 1959.0,464.8 1965.0,478.0 1968.7,455.3 1972.5,485.5 1978.0,415.6 1985.7,481.8 1991.4,464.8 1995.0,440.0 2000.8,427.0 2004.6,563.0 2016.0,559.3 2031.0,565.0 2038.6,566.8 2044.3,559.3 2053.7,570.6 2059.4,540.4 2065.0,555.5 2076.5,542.3 2084.0,557.4 2095.4,553.6 2106.7,555.5 2125.6,553.6 2131.0,542.3 2137.0,582.0 2140.7,568.8 2148.0,589.6 2156.0,587.7 2171.0,591.4 2174.8,549.8 2184.0,546.0 2191.8,549.8 2195.6,587.7 2205.0,582.0 2220.0,582.0 2224.0,566.8 2227.7,568.8 2231.5,585.8 2235.0,349.4 2241.0,345.6 2246.6,358.8 2262.0,360.7 2273.0,358.8 2299.6,360.7 2307.0,336.0 2313.0,381.5 2316.6,360.7 2322.0,491.0 2328.0,360.7 2331.7,555.5 2335.5,360.7 2341.0,400.0 2345.0,358.8 2350.7,419.3 2354.5,358.8 2360.0,551.7 2365.8,362.6 2370.7,498.8 2377.0,338.0 2381.0,449.6 2383.6,338.0 2387.3,597.0 2392.0,578.0 2396.0,606.6 2405.5,606.6 2413.0,599.0 2428.0,599.0 2437.6,601.0" fill="none" stroke="#444" stroke-width="4.5" stroke-linejoin="round"/>
<polyline points="143.7,623.6 150.0,624.0 155.0,627.0 160.0,627.0 161.0,586.0 165.0,585.8 175.0,584.0 179.0,582.0 183.0,626.0 189.0,626.3 195.0,625.0 205.0,624.0 215.0,627.0 220.0,628.2 225.0,627.3 230.0,627.0 240.0,628.0 245.0,627.8 250.0,626.1 255.0,626.2 260.0,626.0 265.0,627.1 270.0,626.3 275.0,626.7 280.0,627.5 285.0,628.4 290.0,628.1 295.0,627.6 300.0,628.0 305.0,628.8 310.0,627.7 315.0,628.4 320.0,625.1 325.0,625.7 330.0,624.9 335.0,625.8 340.0,625.0 345.0,623.7 350.0,625.1 355.0,624.2 360.0,623.7 365.0,624.0 370.0,625.7 375.0,623.6 380.0,624.0 385.0,623.9 390.0,623.5 395.0,623.7 400.0,625.8 405.0,626.4 410.0,625.0 415.0,624.5 420.0,626.0 425.2,627.0 430.4,625.7 435.6,628.3 440.8,627.2 446.0,627.0 449.0,585.0 455.0,583.8 461.0,583.5 467.0,585.0 469.0,627.0 479.0,626.0 480.0,556.0 490.0,554.0 495.2,554.4 500.4,553.8 505.6,554.0 510.8,554.1 516.0,556.0 520.0,566.0 525.5,564.6 531.0,567.1 536.5,565.8 542.0,567.0 545.8,622.0 552.9,618.8 560.0,617.0 565.0,618.1 570.0,617.3 575.0,617.3 580.0,616.5 585.0,616.9 590.0,615.7 595.0,615.0 600.0,616.0 605.0,614.4 610.0,615.5 615.0,614.9 620.0,617.8 625.0,614.3 630.0,617.3 635.0,615.1 640.0,616.0 646.0,617.1 651.9,617.1 657.8,617.3 663.8,616.0 665.7,607.0 672.9,607.5 680.0,605.0 688.0,604.0 695.4,597.0 700.4,595.6 705.5,596.1 710.5,595.0 716.1,594.9 721.8,594.6 727.4,592.5 733.0,593.0 737.0,552.0 743.3,550.5 749.7,550.5 756.0,552.0 759.7,593.0 764.8,595.0 769.8,595.4 774.9,595.8 779.9,595.5 785.0,596.1 790.0,597.0 795.0,597.7 800.1,597.9 805.1,596.5 810.2,596.5 815.2,598.4 820.2,596.7 825.3,597.5 830.3,598.0 835.4,596.0 840.4,597.1 845.5,596.8 850.5,596.7 855.5,598.6 860.6,598.2 865.6,598.7 870.7,599.5 875.7,597.8 880.8,597.8 885.8,599.5 890.8,598.1 895.9,599.2 900.9,597.2 906.0,599.7 911.0,599.0 913.0,586.0 918.5,585.8 924.0,588.0 928.0,599.0 933.3,598.3 938.7,598.7 944.0,599.5 949.3,598.3 954.6,601.4 960.0,599.2 965.3,599.6 970.6,599.5 975.9,600.2 981.3,600.5 986.6,601.0 994.0,608.5 999.8,597.0 1005.8,597.4 1011.9,598.4 1018.0,599.6 1024.0,602.8 1027.4,563.0 1032.6,563.8 1037.8,560.8 1043.0,561.0 1046.0,602.8 1051.0,604.8 1056.0,601.8 1061.0,603.0 1066.0,604.0 1070.0,597.0 1076.3,594.9 1082.7,597.1 1089.0,595.0 1100.0,614.0 1104.0,606.0 1109.0,603.6 1114.0,600.2 1119.0,595.0 1126.0,597.0 1134.0,590.0 1138.0,608.0 1143.6,588.0 1147.0,606.0 1155.0,586.0 1159.0,608.0 1164.0,595.0 1166.0,620.0 1174.0,597.0 1178.0,620.0 1183.0,606.0 1187.0,621.7 1189.0,245.0 1195.0,262.0 1199.0,236.0 1204.0,261.0 1209.0,240.0 1214.0,262.0 1219.0,236.0 1225.0,248.0 1228.7,613.5 1236.0,624.8 1241.1,626.1 1246.1,623.9 1251.2,623.4 1256.3,625.3 1261.3,624.9 1266.4,625.9 1271.5,625.0 1276.5,624.3 1281.6,626.0 1286.7,625.1 1291.7,624.8 1296.8,624.5 1301.9,625.7 1306.9,624.5 1312.0,624.8 1315.6,568.0 1320.0,583.0 1325.5,583.5 1331.0,585.0 1334.6,624.8 1341.8,623.5 1349.0,623.0 1357.0,630.5 1363.3,627.8 1369.7,624.0 1376.0,623.0 1381.0,624.5 1386.0,625.4 1391.0,625.0 1394.6,602.0 1400.0,625.0 1405.4,624.3 1410.9,625.6 1416.3,625.3 1421.8,626.3 1427.2,624.6 1432.7,625.2 1438.1,623.6 1443.6,626.2 1449.0,625.0 1455.0,554.8 1461.3,553.0 1467.7,553.3 1474.0,551.0 1479.6,532.0 1485.0,558.6 1489.0,540.0 1495.2,540.0 1501.3,541.2 1507.5,544.1 1513.7,543.5 1517.5,611.6 1527.0,613.5 1534.5,617.0 1540.1,617.7 1545.8,614.6 1551.4,615.6 1557.0,615.0 1561.0,596.4 1566.6,615.0 1571.7,615.9 1576.8,615.6 1581.9,617.2 1587.0,617.0 1591.0,604.0 1595.0,602.0 1600.7,562.4 1606.4,563.5 1612.0,562.8 1617.7,562.4 1621.5,606.0 1626.5,604.8 1631.6,607.4 1636.6,606.0 1644.0,591.0 1650.0,606.0 1656.3,605.4 1662.5,605.1 1668.8,606.0 1672.5,617.2 1701.0,619.0 1706.6,609.8 1710.0,582.0 1721.0,580.0 1727.5,561.0 1734.0,574.4 1742.5,572.5 1754.0,583.9 1769.0,589.6 1772.8,593.4 1780.0,589.6 1787.8,597.0 1803.0,599.0 1810.6,582.0 1816.0,593.4 1823.6,585.8 1829.5,597.0 1837.0,616.0 1846.5,635.0 1854.0,616.0 1857.9,627.4 1863.5,612.0 1871.0,631.0 1876.0,638.7 1881.7,623.6 1885.5,629.0 1893.0,574.4 1898.7,578.0 1902.5,616.0 1906.0,619.8 1910.0,674.6 1919.5,678.4 1925.0,657.6 1940.0,661.4 1949.8,657.6 1953.5,548.0 1963.0,574.4 1968.7,551.7 1972.5,582.0 1978.0,510.0 1985.7,574.4 1995.0,529.0 2000.8,495.0 2004.6,640.6 2016.0,638.7 2031.0,646.3 2036.7,619.8 2042.4,629.0 2053.7,612.2 2061.3,589.6 2068.9,612.2 2076.5,602.8 2082.0,619.8 2087.8,616.0 2091.6,627.4 2103.0,627.4 2118.0,631.0 2127.5,629.0 2131.0,616.0 2137.0,672.8 2142.6,653.8 2148.0,682.0 2156.0,682.0 2173.0,689.8 2176.7,646.3 2184.0,648.0 2191.8,652.0 2195.6,688.0 2207.0,680.3 2220.0,680.3 2224.0,669.0 2229.6,669.0 2233.4,686.0 2237.0,449.6 2250.4,464.8 2269.3,468.5 2292.0,481.8 2303.4,483.7 2307.0,468.5 2313.0,514.0 2318.5,502.6 2322.0,614.0 2328.0,495.0 2333.6,691.7 2339.4,495.0 2345.0,532.8 2348.8,495.0 2352.5,551.7 2360.0,688.0 2365.8,495.0 2370.7,635.0 2377.0,474.0 2381.0,585.8 2383.6,474.0 2386.6,729.5 2392.0,710.6 2397.9,735.2 2405.5,731.4 2413.0,722.0 2428.0,716.3 2437.6,714.4" fill="none" stroke="#e3304c" stroke-width="2.2" stroke-linejoin="round"/>
<polyline points="143.7,623.6 150.0,624.0 155.0,627.0 160.0,627.0 161.0,586.0 165.0,585.8 175.0,584.0 179.0,582.0 183.0,626.0 189.0,626.3 195.0,625.0 205.0,624.0 215.0,627.0 220.0,628.2 225.0,627.3 230.0,627.0 240.0,628.0 245.0,627.8 250.0,626.1 255.0,626.2 260.0,626.0 265.0,627.1 270.0,626.3 275.0,626.7 280.0,627.5 285.0,628.4 290.0,628.1 295.0,627.6 300.0,628.0 305.0,628.8 310.0,627.7 315.0,628.4 320.0,625.1 325.0,625.7 330.0,624.9 335.0,625.8 340.0,625.0 345.0,623.7 350.0,625.1 355.0,624.2 360.0,623.7 365.0,624.0 370.0,625.7 375.0,623.6 380.0,624.0 385.0,623.9 390.0,623.5 395.0,623.7 400.0,625.8 405.0,626.4 410.0,625.0 415.0,624.5 420.0,626.0 425.2,627.0 430.4,625.7 435.6,628.3 440.8,627.2 446.0,627.0 449.0,585.0 455.0,583.8 461.0,583.5 467.0,585.0 469.0,627.0 479.0,626.0 480.0,556.0 490.0,554.0 495.2,554.4 500.4,553.8 505.6,554.0 510.8,554.1 516.0,556.0 520.0,566.0 525.5,564.6 531.0,567.1 536.5,565.8 542.0,567.0 545.8,622.0 552.9,618.8 560.0,617.0 565.0,618.1 570.0,617.3 575.0,617.3 580.0,616.5 585.0,616.9 590.0,615.7 595.0,615.0 600.0,616.0 605.0,614.4 610.0,615.5 615.0,614.9 620.0,617.8 625.0,614.3 630.0,617.3 635.0,615.1 640.0,616.0 646.0,617.1 651.9,617.1 657.8,617.3 663.8,616.0 665.7,607.0 672.9,607.5 680.0,605.0 688.0,604.0 695.4,597.0 700.4,595.6 705.5,596.1 710.5,595.0 716.1,594.9 721.8,594.6 727.4,592.5 733.0,593.0 737.0,552.0 743.3,550.5 749.7,550.5 756.0,552.0 759.7,593.0 764.8,595.0 769.8,595.4 774.9,595.8 779.9,595.5 785.0,596.1 790.0,597.0 795.0,597.7 800.1,597.9 805.1,596.5 810.2,596.5 815.2,598.4 820.2,596.7 825.3,597.5 830.3,598.0 835.4,596.0 840.4,597.1 845.5,596.8 850.5,596.7 855.5,598.6 860.6,598.2 865.6,598.7 870.7,599.5 875.7,597.8 880.8,597.8 885.8,599.5 890.8,598.1 895.9,599.2 900.9,597.2 906.0,599.7 911.0,599.0 913.0,586.0 918.5,585.8 924.0,588.0 928.0,599.0 933.3,598.3 938.7,598.7 944.0,599.5 949.3,598.3 954.6,601.4 960.0,599.2 965.3,599.6 970.6,599.5 975.9,600.2 981.3,600.5 986.6,601.0 994.0,608.5 999.8,597.0 1005.8,597.4 1011.9,598.4 1018.0,599.6 1024.0,602.8 1027.4,563.0 1032.6,563.8 1037.8,560.8 1043.0,561.0 1046.0,602.8 1051.0,604.8 1056.0,601.8 1061.0,603.0 1066.0,604.0 1070.0,597.0 1076.3,594.9 1082.7,597.1 1089.0,595.0 1100.0,614.0 1104.0,606.0 1109.0,603.6 1114.0,600.2 1119.0,595.0 1126.0,597.0 1134.0,590.0 1138.0,608.0 1143.6,588.0 1147.0,606.0 1155.0,586.0 1159.0,608.0 1164.0,595.0 1166.0,620.0 1174.0,597.0 1178.0,620.0 1183.0,606.0 1187.0,621.7 1189.0,245.0 1195.0,262.0 1199.0,236.0 1204.0,261.0 1209.0,240.0 1214.0,262.0 1219.0,236.0 1225.0,248.0" fill="none" stroke="#bd1b30" stroke-width="3" stroke-linejoin="round"/>
<line x1="143.7" y1="765" x2="2437.6" y2="765" stroke="#a14b60" stroke-width="4"/>
<line x1="143.7" y1="504.5" x2="2437.6" y2="504.5" stroke="rgba(90,100,235,0.75)" stroke-width="4.5" stroke-dasharray="19 11"/>
<text x="121.5" y="230.4" font-size="24" fill="#8f8f8f" text-anchor="end">2,8</text>
<text x="121.5" y="307.9" font-size="24" fill="#8f8f8f" text-anchor="end">2,4</text>
<text x="121.5" y="385.5" font-size="24" fill="#8f8f8f" text-anchor="end">2,0</text>
<text x="121.5" y="463.0" font-size="24" fill="#8f8f8f" text-anchor="end">1,6</text>
<text x="121.5" y="540.6" font-size="24" fill="#8f8f8f" text-anchor="end">1,2</text>
<text x="121.5" y="618.1" font-size="24" fill="#8f8f8f" text-anchor="end">0,8</text>
<text x="121.5" y="695.7" font-size="24" fill="#8f8f8f" text-anchor="end">0,4</text>
<text x="121.5" y="773.2" font-size="24" fill="#8f8f8f" text-anchor="end">0</text>
<text x="2459" y="230.4" font-size="24" fill="#8f8f8f">100</text>
<text x="2459" y="284.7" font-size="24" fill="#8f8f8f">90</text>
<text x="2459" y="339.0" font-size="24" fill="#8f8f8f">80</text>
<text x="2459" y="393.2" font-size="24" fill="#8f8f8f">70</text>
<text x="2459" y="447.5" font-size="24" fill="#8f8f8f">60</text>
<text x="2459" y="501.8" font-size="24" fill="#8f8f8f">50</text>
<text x="2459" y="556.1" font-size="24" fill="#8f8f8f">40</text>
<text x="2459" y="610.4" font-size="24" fill="#8f8f8f">30</text>
<text x="2459" y="664.6" font-size="24" fill="#8f8f8f">20</text>
<text x="2459" y="718.9" font-size="24" fill="#8f8f8f">10</text>
<text x="2459" y="773.2" font-size="24" fill="#8f8f8f">0</text>
<text font-size="24" fill="#8f8f8f" text-anchor="end" transform="translate(162.2,806.0) rotate(-45)">06:38</text>
<text font-size="24" fill="#8f8f8f" text-anchor="end" transform="translate(287.4,806.0) rotate(-45)">06:45</text>
<text font-size="24" fill="#8f8f8f" text-anchor="end" transform="translate(420.2,806.0) rotate(-45)">06:52</text>
<text font-size="24" fill="#8f8f8f" text-anchor="end" transform="translate(554.4,806.0) rotate(-45)">06:59</text>
<text font-size="24" fill="#8f8f8f" text-anchor="end" transform="translate(688.3,806.0) rotate(-45)">07:06</text>
<text font-size="24" fill="#8f8f8f" text-anchor="end" transform="translate(822.4,806.0) rotate(-45)">07:13</text>
<text font-size="24" fill="#8f8f8f" text-anchor="end" transform="translate(957.5,806.0) rotate(-45)">07:20</text>
<text font-size="24" fill="#8f8f8f" text-anchor="end" transform="translate(1090.5,806.0) rotate(-45)">07:27</text>
<text font-size="24" fill="#8f8f8f" text-anchor="end" transform="translate(1224.5,806.0) rotate(-45)">07:34</text>
<text font-size="24" fill="#8f8f8f" text-anchor="end" transform="translate(1359.5,806.0) rotate(-45)">07:41</text>
<text font-size="24" fill="#8f8f8f" text-anchor="end" transform="translate(1493.6,806.0) rotate(-45)">07:48</text>
<text font-size="24" fill="#8f8f8f" text-anchor="end" transform="translate(1628.5,806.0) rotate(-45)">07:55</text>
<text font-size="24" fill="#8f8f8f" text-anchor="end" transform="translate(1761.4,806.0) rotate(-45)">08:02</text>
<text font-size="24" fill="#8f8f8f" text-anchor="end" transform="translate(1894.5,806.0) rotate(-45)">08:09</text>
<text font-size="24" fill="#8f8f8f" text-anchor="end" transform="translate(2029.5,806.0) rotate(-45)">08:16</text>
<text font-size="24" fill="#8f8f8f" text-anchor="end" transform="translate(2162.5,806.0) rotate(-45)">08:23</text>
<text font-size="24" fill="#8f8f8f" text-anchor="end" transform="translate(2297.3,806.0) rotate(-45)">08:30</text>
<text font-size="24" fill="#8f8f8f" text-anchor="end" transform="translate(2431.5,806.0) rotate(-45)">08:37</text>
<text font-size="24" fill="#8f8f8f" text-anchor="middle" transform="translate(70,493) rotate(-90)">Leistung [kW]</text>
<text font-size="24" fill="#8f8f8f" text-anchor="middle" transform="translate(2518,493) rotate(90)">SoC [%]</text>
</svg>
<div class="a" style="left:17px;top:883px;width:2554px;height:110px;background:#b8bcc8;border:2px solid #e3e5e9;border-bottom:3px solid #9ca0a9;border-radius:8px 8px 4px 4px;box-sizing:border-box"></div>
<div class="a t32" style="left:39px;top:897px;font-weight:bold;color:#555">Ladepunkt</div>
<div class="a t32" style="left:671px;top:897px;font-weight:bold;color:#555">Lademodus</div>
<div class="a t32" style="left:671px;top:945px;font-weight:bold;color:#555">Fahrzeug</div>
<div class="a t32" style="left:1303px;top:897px;font-weight:bold;color:#555">Parameter</div>
<div class="a t32" style="left:1303px;top:945px;font-weight:bold;color:#555">SoC</div>
<div class="a t32" style="left:1935px;top:897px;font-weight:bold;color:#555">geladen</div>
<div class="a" style="left:17px;top:994px;width:2554px;height:1392px;border:2px solid #2f3336;box-sizing:border-box"></div>
<div class="a" style="left:19px;top:996px;width:2550px;height:109px;background:#d0d6e3;border-bottom:2px solid #b3b9c4;box-sizing:border-box"></div>
<div class="a" style="left:19px;top:2386px;width:2550px;height:12px;background:#d0d6e3"></div>
<div class="a" style="left:17px;top:2386px;width:2px;height:12px;background:#2f3336"></div>
<div class="a" style="left:2569px;top:2386px;width:2px;height:12px;background:#2f3336"></div>
<div class="a t32" style="left:39px;top:1012px;font-weight:bold;color:#555">Kabel</div>
<svg class="a" style="left:133px;top:1018px" width="19" height="25" viewBox="0 0 19 25"><rect x="4" y="0" width="3" height="7" rx="1.5" fill="#fd7e14"/><rect x="12" y="0" width="3" height="7" rx="1.5" fill="#fd7e14"/><path d="M0 7 H19 V10 Q19 17 12 18 V25 H7 V18 Q0 17 0 10 Z" fill="#fd7e14"/></svg>
<div class="a t32" style="left:671px;top:1012px">PV</div>
<div class="a t32" style="left:671px;top:1060px">Tesla</div>
<div class="a t32" style="left:1303px;top:1012px">0 W</div>
<svg class="a" style="left:1370px;top:1013px" width="30" height="30" viewBox="0 0 30 30"><circle cx="15.3" cy="14.5" r="11.1" fill="none" stroke="#555" stroke-width="2.8"/><path d="M12.9 11.2 L16 9.1 V20.3" fill="none" stroke="#555" stroke-width="2.5" stroke-linejoin="round"/></svg>
<div class="a t32" style="left:1408px;top:1012px">0 A</div>
<div class="a t32" style="left:1303px;top:1060px;letter-spacing:1px">48 %</div>
<svg class="a" style="left:1388px;top:1063px" width="30" height="30" viewBox="0 0 30 30"><path d="M22.6 7.6 A10.6 10.6 0 1 0 22 21.9" fill="none" stroke="#555" stroke-width="3.4"/><path d="M17.5 10.6 H26.6 V2.6 Z" fill="#555"/></svg>
<div class="a t32" style="left:1935px;top:1012px">10,7 kWh / 0,0 km</div>
<svg style="position:absolute;left:2521px;top:1012px" width="29" height="29" viewBox="0 0 29 29"><rect x="0" y="0" width="29" height="29" rx="4" fill="#444"/><rect x="5.5" y="12" width="18" height="5" fill="#d0d6e3"/></svg>
<div class="a" style="left:28px;top:1118px;width:2532px;height:100px;background:#d1ecf1;border:2px solid #bee5eb;border-radius:8px;box-sizing:border-box"></div>
<svg class="a" style="left:80px;top:1152px" width="32" height="32" viewBox="0 0 32 32"><circle cx="16" cy="16" r="15.5" fill="#0c5460"/><circle cx="16" cy="9.5" r="2.6" fill="#d1ecf1"/><path d="M12.5 14 H17.5 V21.5 H19.5 V24 H12.5 V21.5 H14.5 V16.5 H12.5 Z" fill="#d1ecf1"/></svg>
<div class="a t32" style="left:121px;top:1153px;color:#0c5460;letter-spacing:0.27px">Die Ladung kann nicht gestartet werden, da die Einschaltschwelle nicht erreicht wird.</div>
<svg class="a" style="left:38px;top:1234px" width="28" height="32" viewBox="0 0 28 32"><path d="M6 14 V9 A8 8 0 0 1 22 9 V14" fill="none" stroke="#555" stroke-width="4.5"/><rect x="0" y="13" width="28" height="19" rx="3" fill="#555"/></svg>
<div class="a t32" style="left:75px;top:1235px;letter-spacing:0.3px">Ladepunkt sperren</div>
<div class="sw" style="top:1226px;background:#28a745"><div class="h" style="left:2px"></div><div class="l" style="padding-left:15px">Nein</div></div>
<div class="hr" style="top:1320px"></div>
<svg class="a" style="left:38px;top:1378px" width="40" height="28" viewBox="0 0 40 28"><path d="M7 12 L11 3.5 Q12.2 1 15 1 H27 Q29.5 1 31 3.5 L36 12 Z" fill="#555"/><path d="M11.5 11 L14 4.5 Q14.6 3.5 15.8 3.5 H19 V11 Z M22 3.5 H26.5 Q27.8 3.5 28.5 4.8 L32 11 H22 Z" fill="#fff"/><rect x="0" y="11" width="40" height="13" rx="4" fill="#555"/><circle cx="10" cy="22.5" r="4.5" fill="#fff" stroke="#555" stroke-width="3"/><circle cx="30" cy="22.5" r="4.5" fill="#fff" stroke="#555" stroke-width="3"/></svg>
<div class="a t32" style="left:86px;top:1377px;letter-spacing:0.3px">Fahrzeug</div>
<div class="a" style="left:882px;top:1354px;width:1668px;height:60px;border-radius:9px;border:2px solid #c9ccd2;box-sizing:border-box;background:linear-gradient(#e6e6e8,#ececed 55%,#f8f8f9)"></div>
<div class="a" style="left:901px;top:1372px;font-size:22px;line-height:26px;color:#495057">Tesla</div>
<svg class="a" style="left:2526px;top:1375px" width="11" height="20" viewBox="0 0 11 20"><path d="M5.5 0 L11 8 H0 Z M0 12 H11 L5.5 20 Z" fill="#4a4f55"/></svg>
<div class="a t32" style="left:38px;top:1460px;letter-spacing:0.3px">Lademodus</div>
<div class="a" style="left:882px;top:1438px;width:397px;height:75px;border:2px solid #dc3545;border-right:none;border-radius:8px 0 0 8px;box-sizing:border-box;background:#fff"></div>
<div class="a" style="left:1278px;top:1438px;width:270px;height:75px;background:#28a745"></div>
<div class="a" style="left:1548px;top:1438px;width:358px;height:75px;border:2px solid #007bff;border-right:none;box-sizing:border-box;background:#fff"></div>
<div class="a" style="left:1906px;top:1438px;width:348px;height:75px;border:2px solid #6c757d;border-right:none;box-sizing:border-box;background:#fff"></div>
<div class="a" style="left:2254px;top:1438px;width:296px;height:75px;border:2px solid #343a40;border-radius:0 8px 8px 0;box-sizing:border-box;background:#fff"></div>
<div class="a t32" style="left:882px;top:1460px;width:397px;text-align:center;color:#dc3545;letter-spacing:0.3px">Sofortladen</div>
<div class="a t32" style="left:1278px;top:1460px;width:270px;text-align:center;color:#fff">PV</div>
<div class="a t32" style="left:1548px;top:1460px;width:358px;text-align:center;color:#007bff;letter-spacing:0.3px">Zielladen</div>
<div class="a t32" style="left:1906px;top:1460px;width:348px;text-align:center;color:#6c757d;letter-spacing:0.3px">Standby</div>
<div class="a t32" style="left:2254px;top:1460px;width:296px;text-align:center;color:#343a40">Stop</div>
<svg class="a" style="left:38px;top:1529px" width="34" height="32" viewBox="0 0 34 32"><path d="M17 0.5 L21.6 10.3 L32.5 11.6 L24.5 19 L26.7 30 L17 24.6 L7.3 30 L9.5 19 L1.5 11.6 L12.4 10.3 Z" fill="#555" stroke="#555" stroke-width="1.5" stroke-linejoin="round"/></svg>
<div class="a t32" style="left:82px;top:1530px;letter-spacing:0.3px">Priorität</div>
<div class="sw" style="top:1522px;background:#dc3545"><div class="h" style="left:2px"></div><div class="l" style="padding-left:15px">Nein</div></div>
<svg class="a" style="left:38px;top:1600px" width="30" height="30" viewBox="0 0 30 30"><circle cx="15" cy="15" r="12.8" fill="none" stroke="#555" stroke-width="3.2"/><path d="M15 7 V15.5 L20 19" fill="none" stroke="#555" stroke-width="3" stroke-linecap="round"/></svg>
<div class="a t32" style="left:78px;top:1600px;letter-spacing:0.3px">Zeitladen</div>
<div class="sw" style="top:1592px;background:#28a745"><div class="h" style="left:1648px"></div><div class="l" style="padding-right:18px">Ja</div></div>
<div class="a" style="left:37px;top:1668px;font-size:64px;line-height:64px;color:#555;letter-spacing:-1.2px;-webkit-text-stroke:1px #555">Termine Zeitladen</div>
<div class="a" style="left:2479px;top:1668px;width:71px;height:62px;background:#6c757d;border-radius:8px"></div>
<svg class="a" style="left:2490px;top:1678px" width="50" height="42" viewBox="0 0 50 42"><path d="M14.80,12.81 L15.25,9.95 L20.95,9.95 L21.40,12.81 L23.89,14.25 L26.59,13.20 L29.44,18.15 L27.19,19.96 L27.19,22.84 L29.44,24.65 L26.59,29.60 L23.89,28.55 L21.40,29.99 L20.95,32.85 L15.25,32.85 L14.80,29.99 L12.31,28.55 L9.61,29.60 L6.76,24.65 L9.01,22.84 L9.01,19.96 L6.76,18.15 L9.61,13.20 L12.31,14.25 Z" fill="#fff" stroke="#fff" stroke-width="1" stroke-linejoin="round"/><circle cx="18.1" cy="21.4" r="3.6" fill="#6c757d"/><path d="M39.41,11.27 L41.00,11.57 L41.00,14.63 L39.41,14.93 L38.94,15.75 L39.47,17.27 L36.83,18.80 L35.77,17.58 L34.83,17.58 L33.77,18.80 L31.13,17.27 L31.66,15.75 L31.19,14.93 L29.60,14.63 L29.60,11.57 L31.19,11.27 L31.66,10.45 L31.13,8.93 L33.77,7.40 L34.83,8.62 L35.77,8.62 L36.83,7.40 L39.47,8.93 L38.94,10.45 Z" fill="#fff" stroke="#fff" stroke-width="0.8" stroke-linejoin="round"/><circle cx="35.3" cy="13.1" r="1.7" fill="#6c757d"/><path d="M39.41,27.47 L41.00,27.77 L41.00,30.83 L39.41,31.13 L38.94,31.95 L39.47,33.47 L36.83,35.00 L35.77,33.78 L34.83,33.78 L33.77,35.00 L31.13,33.47 L31.66,31.95 L31.19,31.13 L29.60,30.83 L29.60,27.77 L31.19,27.47 L31.66,26.65 L31.13,25.13 L33.77,23.60 L34.83,24.82 L35.77,24.82 L36.83,23.60 L39.47,25.13 L38.94,26.65 Z" fill="#fff" stroke="#fff" stroke-width="0.8" stroke-linejoin="round"/><circle cx="35.3" cy="29.3" r="1.7" fill="#6c757d"/></svg>
<div class="a t32" style="left:38px;top:1754px;letter-spacing:0.35px">Mittwochs nach Hannover</div>
<div class="a" style="left:2211px;top:1740px;width:339px;height:55px;background:#d4edda;border:2px solid #28a745;border-radius:9px;box-sizing:border-box"></div>
<svg class="a" style="left:2220px;top:1752px" width="29" height="32" viewBox="0 0 28 32"><rect x="0" y="4" width="28" height="28" rx="3" fill="#155724"/><rect x="5" y="0" width="4" height="7" rx="1" fill="#155724"/><rect x="19" y="0" width="4" height="7" rx="1" fill="#155724"/><rect x="4" y="15" width="4" height="4" fill="#d4edda"/><rect x="4" y="23" width="4" height="4" fill="#d4edda"/><rect x="12" y="15" width="4" height="4" fill="#d4edda"/><rect x="12" y="23" width="4" height="4" fill="#d4edda"/><rect x="20" y="15" width="4" height="4" fill="#d4edda"/><rect x="20" y="23" width="4" height="4" fill="#d4edda"/></svg>
<div class="a t32" style="left:2257px;top:1752px;color:#155724">Mi</div>
<svg class="a" style="left:2300px;top:1752px" width="31" height="31" viewBox="0 0 31 31"><circle cx="15.5" cy="15.5" r="15.5" fill="#155724"/><path d="M15.5 7 V16 L20.5 20" fill="none" stroke="#d4edda" stroke-width="3.2" stroke-linecap="round"/></svg>
<div class="a t32" style="left:2340px;top:1752px;color:#155724;letter-spacing:0.5px">05:15 - 09:00</div>
<div class="hr" style="top:1824px"></div>
<div class="a" style="left:37px;top:1865px;font-size:64px;line-height:64px;color:#555;letter-spacing:-1.0px;-webkit-text-stroke:1px #555">Einstellungen für "PV"</div>
<div class="a t32" style="left:38px;top:1976px;letter-spacing:0.3px">Minimaler Dauerstrom</div>
<div class="trk" style="top:1980px"></div>
<div class="thumb" style="left:883px;top:1969px"></div>
<div class="a t32" style="right:28px;top:1970px;letter-spacing:0.3px">Aus</div>
<div class="a t32" style="left:38px;top:2059px;letter-spacing:0.3px">Mindest-SoC für das Fahrzeug</div>
<div class="trk" style="top:2065px"></div>
<div class="thumb" style="left:1025px;top:2054px"></div>
<div class="a t32" style="right:28px;top:2053px;letter-spacing:0.3px">10 %</div>
<div class="a t32" style="left:38px;top:2143px;letter-spacing:0.3px">Mindest-SoC-Strom</div>
<div class="trk" style="top:2148px"></div>
<div class="thumb" style="left:2236px;top:2137px"></div>
<div class="a t32" style="right:28px;top:2137px;letter-spacing:0.3px">32 A</div>
<div class="a t32" style="left:38px;top:2227px;letter-spacing:0.3px">SoC-Limit für das Fahrzeug</div>
<div class="trk" style="top:2233px"></div>
<div class="thumb" style="left:2236px;top:2222px"></div>
<div class="a t32" style="right:28px;top:2221px;letter-spacing:0.3px">Aus</div>
<div class="a t32" style="left:38px;top:2293px;letter-spacing:0.3px">Einspeisegrenze beachten</div>
<div class="sw" style="top:2284px;background:#dc3545"><div class="h" style="left:2px"></div><div class="l" style="padding-left:15px">Nein</div></div>
</body></html>
